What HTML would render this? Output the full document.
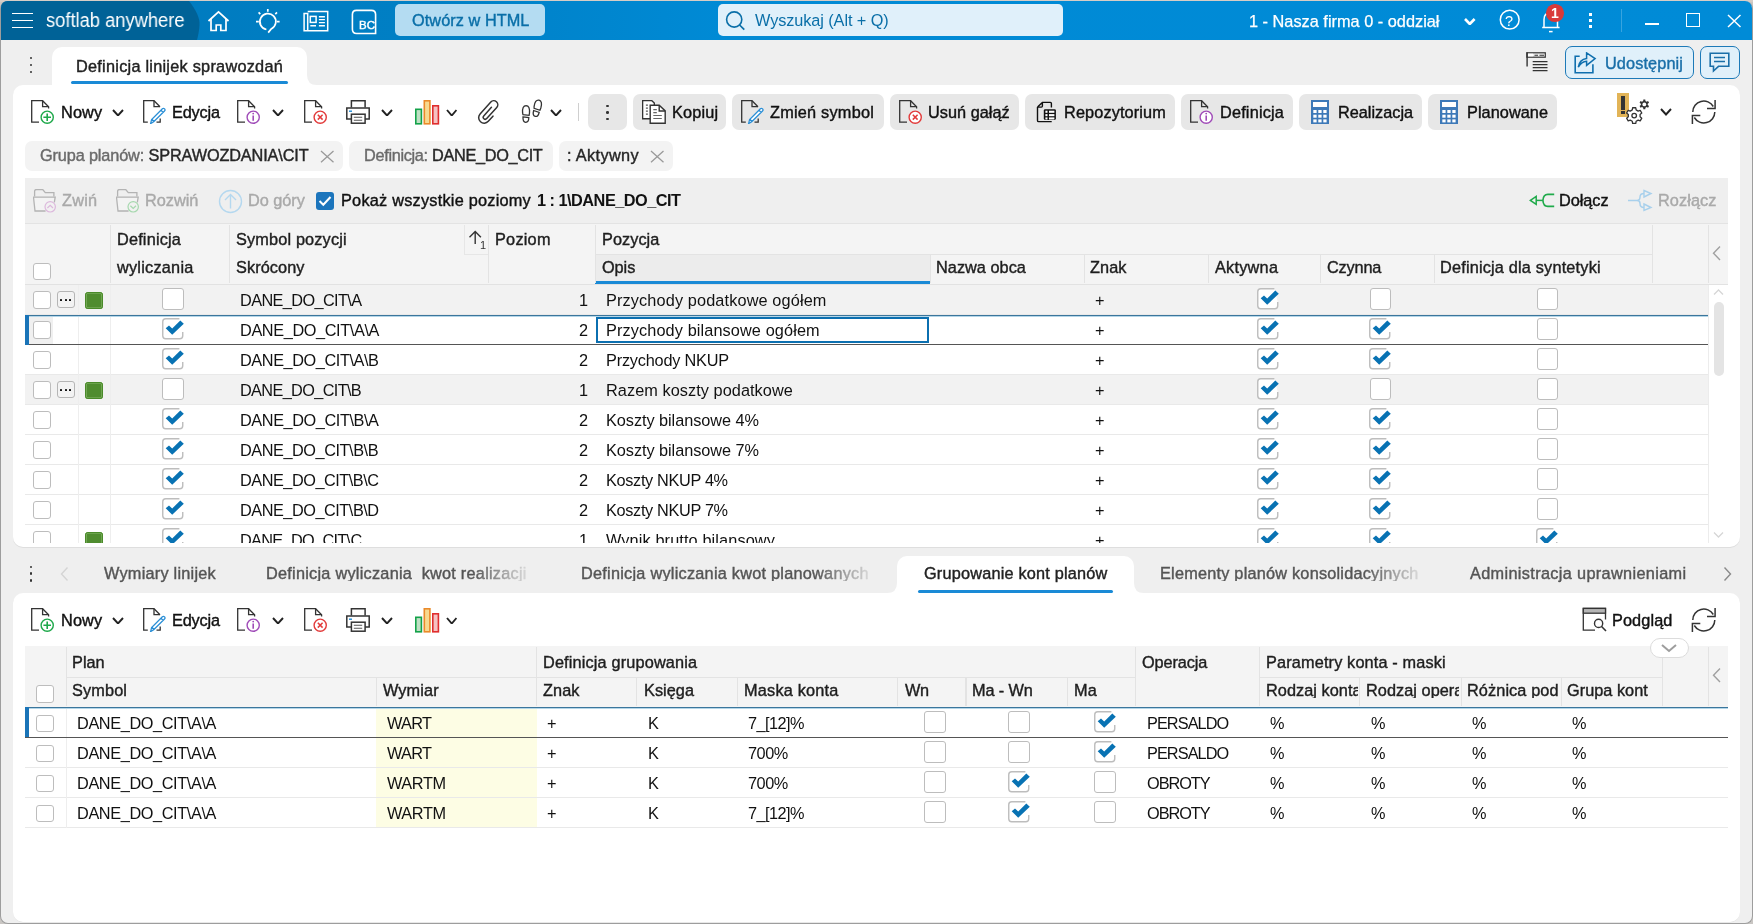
<!DOCTYPE html><html><head><meta charset="utf-8"><title>softlab anywhere</title><style>
*{margin:0;padding:0;box-sizing:border-box}
html,body{width:1753px;height:924px;overflow:hidden;background:#efefef;font-family:"Liberation Sans", sans-serif}
.b{position:absolute}
.t{position:absolute;white-space:nowrap;line-height:1;font-family:"Liberation Sans", sans-serif;will-change:transform}
</style></head><body><div class="b" style="left:0px;top:0px;width:1753px;height:924px;background:#c9c6c3"></div><div class="b" style="left:0px;top:0px;width:1753px;height:2px;background:#d6cdc6"></div><div class="b" style="left:0px;top:1px;width:1753px;height:923px;background:#efefef;border:1px solid #9d9d9d;border-top:none;border-radius:8px 8px 8px 8px;overflow:hidden"></div><div class="b" style="left:1px;top:1px;width:1751px;height:39px;background:linear-gradient(90deg,#0079bd 0px,#007fc4 400px,#008ad5 720px,#008bd7 1751px);border-radius:7px 7px 0 0"></div><svg class="b" style="left:1px;top:1px;" width="200" height="39" viewBox="0 0 200 39" fill="none"><path d="M7 0 H188 C195 9 199 17 198.5 24 C198 31 197 35 196 39 H0 V7 Q0 0 7 0 Z" fill="#006297"/></svg><div class="b" style="left:12px;top:12.5px;width:21px;height:1.8px;background:#fff"></div><div class="b" style="left:12px;top:19.5px;width:21px;height:1.8px;background:#fff"></div><div class="b" style="left:12px;top:26.5px;width:21px;height:1.8px;background:#fff"></div><div class="t" style="left:45.5px;top:11.11px;font-size:19.6px;color:#fff;font-weight:400;letter-spacing:0.000px;transform:scaleX(0.935);transform-origin:0 0">softlab anywhere</div><svg class="b" style="left:207px;top:10px;" width="24" height="23" viewBox="0 0 24 23" fill="none"><path d="M1.5 11 L11.5 1.8 L21.5 11" stroke="#fff" stroke-width="1.7"/><path d="M4 9 V20.5 H9.2 V15 H13.8 V20.5 H19 V9" stroke="#fff" stroke-width="1.7"/></svg><svg class="b" style="left:254px;top:7px;" width="30" height="27" viewBox="0 0 30 27" fill="none"><path d="M12.4 22.5 A8 8 0 1 1 17.2 21.9 L14.2 25.6" stroke="#fff" stroke-width="1.7"/><path d="M13.8 2 V4.8 M2 14.6 H4.8 M22.8 14.6 H25.6 M6.3 7.1 L4.6 5.4 M21.3 7.1 L23 5.4" stroke="#fff" stroke-width="1.7"/></svg><svg class="b" style="left:303px;top:10px;" width="27" height="23" viewBox="0 0 27 23" fill="none"><path d="M4.7 1.6 H24.7 V20.75 H1.1 V3.6 H4.7 V20.75" stroke="#fff" stroke-width="1.5"/><rect x="7.3" y="6.4" width="5.8" height="6" stroke="#fff" stroke-width="1.5"/><path d="M15.9 6.8 H21.9 M15.9 9.6 H21.9 M15.9 12.6 H21.9 M7.3 15.8 H13 M15.9 15.8 H21.9" stroke="#fff" stroke-width="1.4"/></svg><svg class="b" style="left:351px;top:9px;" width="27" height="27" viewBox="0 0 27 27" fill="none"><path d="M5.4 1.4 H20.4 Q24.6 1.4 24.6 5.6 V24.5 H5.6 Q1.4 24.5 1.4 20.3 V5.6 Q1.4 1.4 5.4 1.4 Z" stroke="#fff" stroke-width="1.6"/></svg><div class="t" style="left:359.4px;top:20.07px;font-size:11.5px;color:#fff;font-weight:400;-webkit-text-stroke:0.4px #fff;letter-spacing:0.100px;">BC</div><div class="b" style="left:395px;top:4px;width:150px;height:32px;background:#b4dcf2;border-radius:5px"></div><div class="t" style="left:412.0px;top:12.00px;font-size:16.3px;color:#0a6fa8;font-weight:400;-webkit-text-stroke:0.4px #0a6fa8;letter-spacing:0.060px;">Otwórz w HTML</div><div class="b" style="left:718px;top:4px;width:345px;height:32px;background:#e0f0fa;border-radius:5px"></div><svg class="b" style="left:724px;top:9px;" width="24" height="24" viewBox="0 0 24 24" fill="none"><circle cx="10.2" cy="10.5" r="7.6" stroke="#0a6fa8" stroke-width="1.6"/><path d="M15.6 16 L20.3 20.7" stroke="#0a6fa8" stroke-width="1.7"/></svg><div class="t" style="left:754.5px;top:12.00px;font-size:16.3px;color:#0a6fa8;font-weight:400;letter-spacing:-0.084px;">Wyszukaj (Alt + Q)</div><div class="t" style="left:1248.5px;top:13.40px;font-size:16.3px;color:#fff;font-weight:400;letter-spacing:0.017px;-webkit-text-stroke:0.25px #fff">1 - Nasza firma 0 - oddział</div><svg class="b" style="left:1464px;top:18.3px;" width="11.6" height="7" viewBox="0 0 11.6 7" fill="none"><path d="M1 1 L5.8 6 L10.6 1" stroke="#fff" stroke-width="2.6"/></svg><svg class="b" style="left:1498px;top:8px;" width="24" height="24" viewBox="0 0 24 24" fill="none"><circle cx="11.7" cy="11.7" r="9.4" stroke="#fff" stroke-width="1.5"/></svg><div class="t" style="left:1505.0px;top:13.73px;font-size:14.5px;color:#fff;font-weight:400;letter-spacing:0.000px;">?</div><svg class="b" style="left:1540px;top:11px;" width="24" height="23" viewBox="0 0 24 23" fill="none"><path d="M4 16.2 V8.5 Q4 1.8 10.8 1.8 Q17.5 1.8 17.5 8.5 V16.2 M2.2 16.5 H19.6" stroke="#fff" stroke-width="1.5"/><path d="M9 20.6 H12.6" stroke="#fff" stroke-width="1.5"/></svg><div class="b" style="left:1546.3px;top:4.4px;width:17.6px;height:17.6px;background:#d93a3a;border-radius:50%"></div><div class="t" style="left:1551.3px;top:5.95px;font-size:14px;color:#fff;font-weight:700;letter-spacing:0.000px;">1</div><div class="b" style="left:1589.3px;top:13.4px;width:2.6px;height:2.6px;background:#fff"></div><div class="b" style="left:1589.3px;top:19.4px;width:2.6px;height:2.6px;background:#fff"></div><div class="b" style="left:1589.3px;top:25.4px;width:2.6px;height:2.6px;background:#fff"></div><div class="b" style="left:1621px;top:9px;width:1.3px;height:22.5px;background:rgba(255,255,255,0.22)"></div><div class="b" style="left:1645px;top:23.3px;width:14px;height:1.5px;background:#fff"></div><div class="b" style="left:1686px;top:13.2px;width:14px;height:13.5px;border:1.5px solid #fff"></div><svg class="b" style="left:1727px;top:14px;" width="15" height="14" viewBox="0 0 15 14" fill="none"><path d="M1 1 L13.5 13 M13.5 1 L1 13" stroke="#fff" stroke-width="1.5"/></svg><div class="b" style="left:13px;top:85px;width:1727px;height:462px;background:#fff;border-radius:10px;box-shadow:0 1px 0 #dedede"></div><div class="b" style="left:29.7px;top:56.7px;width:2.7px;height:2.7px;background:#333;border-radius:50%"></div><div class="b" style="left:29.7px;top:63.7px;width:2.7px;height:2.7px;background:#333;border-radius:50%"></div><div class="b" style="left:29.7px;top:70.7px;width:2.7px;height:2.7px;background:#333;border-radius:50%"></div><div class="b" style="left:52px;top:47px;width:255px;height:45px;background:#fff;border-radius:10px 10px 0 0"></div><svg class="b" style="left:307px;top:75px;" width="10" height="10" viewBox="0 0 10 10" fill="none"><path d="M0 0 V10 H10 Q0 10 0 0 Z" fill="#fff"/></svg><div class="t" style="left:76.0px;top:57.70px;font-size:16.3px;color:#222;font-weight:400;-webkit-text-stroke:0.4px #222;letter-spacing:0.250px;">Definicja linijek sprawozdań</div><div class="b" style="left:71px;top:81px;width:217px;height:3px;background:#1a8ad6;border-radius:2px"></div><svg class="b" style="left:1525px;top:51px;" width="24" height="22" viewBox="0 0 24 22" fill="none"><path d="M2.1 1.3 V15.5" stroke="#333" stroke-width="1.4"/><rect x="1.9" y="1.8" width="18.4" height="4.4" stroke="#333" stroke-width="1.2"/><rect x="3" y="2.7" width="5" height="2.6" fill="#fff"/><path d="M9.5 4.2 H13 M14.5 4.2 H19" stroke="#333" stroke-width="1.1"/><path d="M7.7 10.7 H22.5 M7.7 13.7 H22.5 M7.7 16.7 H22.5 M7.7 19.6 H22.5" stroke="#333" stroke-width="1.3"/></svg><div class="b" style="left:1564.5px;top:46.3px;width:129px;height:32.7px;background:#e0f0fa;border:1.6px solid #1d7ab8;border-radius:7px"></div><svg class="b" style="left:1574px;top:52px;" width="23" height="22" viewBox="0 0 23 22" fill="none"><path d="M5.7 4.3 H1.2 V20.8 H18.9 V12.2" stroke="#0f6fae" stroke-width="1.6"/><path d="M4.3 15.1 Q5.5 7.5 12.6 6.6 V0.9 L21.1 6.5 L12.6 13.4 V9.3 Q7.5 9.6 4.3 15.1 Z" stroke="#0f6fae" stroke-width="1.5" stroke-linejoin="miter"/></svg><div class="t" style="left:1605.4px;top:55.20px;font-size:16.3px;color:#1a6fa8;font-weight:400;-webkit-text-stroke:0.4px #1a6fa8;letter-spacing:0.106px;">Udostępnij</div><div class="b" style="left:1699.5px;top:46.3px;width:40.5px;height:32.7px;background:#e0f0fa;border:1.6px solid #1d7ab8;border-radius:7px"></div><svg class="b" style="left:1709px;top:52px;" width="22" height="21" viewBox="0 0 22 21" fill="none"><path d="M1.2 1.2 H19.8 V14.3 H9.5 L4.5 19 V14.3 H1.2 Z" stroke="#1a6fa8" stroke-width="1.6"/><path d="M5 5.5 H16 M5 9.5 H16" stroke="#1a6fa8" stroke-width="1.5"/></svg><svg class="b" style="left:31px;top:100px;" width="24" height="24" viewBox="0 0 24 24" fill="none"><path d="M8 22.2 H0.7 V0.7 H11.6 L17.6 6.7 V8.5" stroke="#333" stroke-width="1.3"/><path d="M11.6 0.7 V6.7 H17.4" stroke="#333" stroke-width="1.3"/><circle cx="16.2" cy="17.2" r="6.1" fill="#fff" stroke="#1ea84a" stroke-width="1.4"/><path d="M12.4 17.2 H20 M16.2 13.4 V21" stroke="#1ea84a" stroke-width="1.6"/></svg><div class="t" style="left:60.8px;top:104.00px;font-size:16.3px;color:#111;font-weight:400;-webkit-text-stroke:0.4px #111;letter-spacing:0.133px;">Nowy</div><svg class="b" style="left:112px;top:108.5px;" width="12" height="7.5" viewBox="0 0 12 7.5" fill="none"><path d="M1 1 L6.0 6.5 L11 1" stroke="#222" stroke-width="1.9"/></svg><svg class="b" style="left:143px;top:100px;" width="24" height="24" viewBox="0 0 24 24" fill="none"><path d="M4.8 22.2 H0.7 V0.7 H11 L17 6.7" stroke="#333" stroke-width="1.3"/><path d="M11 0.7 V6.7 H17" stroke="#333" stroke-width="1.3"/><path d="M13.5 22.2 H17.2 V18.5" stroke="#333" stroke-width="1.3"/><path d="M7.6 23.6 L8.6 19.6 L19.4 8.8 Q20.5 7.8 21.6 8.9 Q22.5 10 21.5 11 L10.7 21.8 Z M8.9 19.3 L11 21.5 M18 10.2 L20.2 12.4" stroke="#2b8fd6" stroke-width="1.3" fill="#fff"/></svg><div class="t" style="left:172.0px;top:104.00px;font-size:16.3px;color:#111;font-weight:400;-webkit-text-stroke:0.4px #111;letter-spacing:-0.159px;">Edycja</div><svg class="b" style="left:237px;top:100px;" width="24" height="24" viewBox="0 0 24 24" fill="none"><path d="M8 22.2 H0.7 V0.7 H11.6 L17.6 6.7 V8.5" stroke="#333" stroke-width="1.3"/><path d="M11.6 0.7 V6.7 H17.4" stroke="#333" stroke-width="1.3"/><circle cx="16.2" cy="17.2" r="6.1" fill="#fff" stroke="#a04cb8" stroke-width="1.4"/><path d="M16.2 15.5 V20.8" stroke="#a04cb8" stroke-width="1.6"/><circle cx="16.2" cy="13.6" r="0.9" fill="#a04cb8"/></svg><svg class="b" style="left:272px;top:108.5px;" width="12" height="7.5" viewBox="0 0 12 7.5" fill="none"><path d="M1 1 L6.0 6.5 L11 1" stroke="#222" stroke-width="1.9"/></svg><svg class="b" style="left:304px;top:100px;" width="24" height="24" viewBox="0 0 24 24" fill="none"><path d="M8 22.2 H0.7 V0.7 H11.6 L17.6 6.7 V8.5" stroke="#333" stroke-width="1.3"/><path d="M11.6 0.7 V6.7 H17.4" stroke="#333" stroke-width="1.3"/><circle cx="16.2" cy="17.2" r="6.1" fill="#fff" stroke="#e23b3b" stroke-width="1.4"/><path d="M13.8 14.8 L18.6 19.6 M18.6 14.8 L13.8 19.6" stroke="#e23b3b" stroke-width="1.5"/></svg><svg class="b" style="left:346px;top:100px;" width="24" height="24" viewBox="0 0 24 24" fill="none"><path d="M5.4 7.5 V0.8 H19.1 V7.5" stroke="#333" stroke-width="1.5"/><path d="M5 19 H0.8 V7.9 H23.2 V19 H19" stroke="#333" stroke-width="1.5"/><rect x="5.4" y="14.2" width="13.7" height="9" stroke="#333" stroke-width="1.5" fill="#fff"/><path d="M7.8 17.3 H16.2 M7.8 20.3 H16.2" stroke="#555" stroke-width="1.1"/><path d="M3 11.2 H6" stroke="#1e8ad6" stroke-width="1.4"/></svg><svg class="b" style="left:381.4px;top:108.5px;" width="12" height="7.5" viewBox="0 0 12 7.5" fill="none"><path d="M1 1 L6.0 6.5 L11 1" stroke="#222" stroke-width="1.9"/></svg><svg class="b" style="left:414.5px;top:99.5px;" width="25" height="25" viewBox="0 0 25 25" fill="none"><rect x="0.8" y="9.3" width="5.6" height="14.5" fill="#bfe0c4" stroke="#14a24a" stroke-width="1.6"/><rect x="9.3" y="0.8" width="5.6" height="23" fill="#f7d98f" stroke="#ea8a2a" stroke-width="1.6"/><rect x="17.8" y="5.8" width="5.6" height="18" fill="#f5c2c2" stroke="#e02e2e" stroke-width="1.6"/></svg><svg class="b" style="left:445.6px;top:108.5px;" width="11.5" height="7.5" viewBox="0 0 11.5 7.5" fill="none"><path d="M1 1 L5.75 6.5 L10.5 1" stroke="#222" stroke-width="1.9"/></svg><svg class="b" style="left:477px;top:100px;" width="23" height="25" viewBox="0 0 23 25" fill="none"><g transform="translate(11.2 13.2) rotate(42)"><path d="M5.5 -1 V6 A5.5 5.5 0 0 1 -5.5 6 V-10 A4 4 0 0 1 2.5 -10 V5 A2 2 0 0 1 -1.5 5 V-6.5" stroke="#333" stroke-width="1.5" stroke-linecap="round"/></g></svg><svg class="b" style="left:521px;top:99px;" width="23" height="26" viewBox="0 0 23 26" fill="none"><g transform="translate(0.6 6)"><path d="M1 8 Q0.4 0.8 4.5 0.7 Q8.4 0.8 7.9 8 L7.5 10.4 L1.4 9.7 Z" stroke="#333" stroke-width="1.3"/><path d="M1.4 11.9 L7.2 12.6 Q7.2 17.4 4.1 17.3 Q1.1 17.2 1.4 11.9 Z" stroke="#333" stroke-width="1.3"/></g><g transform="translate(11.8 0.2) rotate(12 4 9)"><path d="M1 8 Q0.4 0.8 4.5 0.7 Q8.4 0.8 7.9 8 L7.5 10.4 L1.4 9.7 Z" stroke="#333" stroke-width="1.3"/><path d="M1.4 11.9 L7.2 12.6 Q7.2 17.4 4.1 17.3 Q1.1 17.2 1.4 11.9 Z" stroke="#333" stroke-width="1.3"/></g></svg><svg class="b" style="left:550px;top:108.5px;" width="12" height="7.5" viewBox="0 0 12 7.5" fill="none"><path d="M1 1 L6.0 6.5 L11 1" stroke="#222" stroke-width="1.9"/></svg><div class="b" style="left:577.5px;top:103px;width:1.5px;height:18px;background:#cfcfcf"></div><div class="b" style="left:588px;top:94px;width:39px;height:36px;background:#e7e7e7;border-radius:7px"></div><div class="b" style="left:606.2px;top:104.5px;width:2.7px;height:2.7px;background:#333;border-radius:50%"></div><div class="b" style="left:606.2px;top:111px;width:2.7px;height:2.7px;background:#333;border-radius:50%"></div><div class="b" style="left:606.2px;top:117.5px;width:2.7px;height:2.7px;background:#333;border-radius:50%"></div><div class="b" style="left:633px;top:94px;width:93px;height:36px;background:#e7e7e7;border-radius:7px"></div><svg class="b" style="left:642px;top:100px;" width="24" height="24" viewBox="0 0 24 24" fill="none"><path d="M0.6 0.5 H9.6 L12.3 3 V18.7 H0.6 Z" stroke="#333" stroke-width="1.4" fill="#fff"/><path d="M3.9 5.2 H5.9 M3.9 8.2 H5.9 M3.9 11.1 H5.9 M3.9 14.1 H5.9" stroke="#555" stroke-width="1.2"/><path d="M8.2 5.2 H17.2 L23.2 10.9 V23.3 H8.2 Z" stroke="#333" stroke-width="1.4" fill="#fff"/><path d="M17.2 5.2 V11 H23" stroke="#333" stroke-width="1.4"/><path d="M11.3 9.7 H14.8 M11.3 12.6 H14.8 M11.3 15.5 H19.8 M11.3 18.5 H19.8" stroke="#666" stroke-width="1.2"/></svg><div class="t" style="left:671.6px;top:104.00px;font-size:16.3px;color:#111;font-weight:400;-webkit-text-stroke:0.4px #111;letter-spacing:0.156px;">Kopiuj</div><div class="b" style="left:732px;top:94px;width:151.5px;height:36px;background:#e7e7e7;border-radius:7px"></div><svg class="b" style="left:741px;top:100px;" width="24" height="24" viewBox="0 0 24 24" fill="none"><path d="M4.8 22.2 H0.7 V0.7 H11 L17 6.7" stroke="#333" stroke-width="1.3"/><path d="M11 0.7 V6.7 H17" stroke="#333" stroke-width="1.3"/><path d="M13.5 22.2 H17.2 V18.5" stroke="#333" stroke-width="1.3"/><path d="M7.6 23.6 L8.6 19.6 L19.4 8.8 Q20.5 7.8 21.6 8.9 Q22.5 10 21.5 11 L10.7 21.8 Z M8.9 19.3 L11 21.5 M18 10.2 L20.2 12.4" stroke="#2b8fd6" stroke-width="1.3" fill="#fff"/></svg><div class="t" style="left:770.3px;top:104.00px;font-size:16.3px;color:#111;font-weight:400;-webkit-text-stroke:0.4px #111;letter-spacing:0.225px;">Zmień symbol</div><div class="b" style="left:890.3px;top:94px;width:128.4000000000001px;height:36px;background:#e7e7e7;border-radius:7px"></div><svg class="b" style="left:899px;top:100px;" width="24" height="24" viewBox="0 0 24 24" fill="none"><path d="M8 22.2 H0.7 V0.7 H11.6 L17.6 6.7 V8.5" stroke="#333" stroke-width="1.3"/><path d="M11.6 0.7 V6.7 H17.4" stroke="#333" stroke-width="1.3"/><circle cx="16.2" cy="17.2" r="6.1" fill="#fff" stroke="#e23b3b" stroke-width="1.4"/><path d="M13.8 14.8 L18.6 19.6 M18.6 14.8 L13.8 19.6" stroke="#e23b3b" stroke-width="1.5"/></svg><div class="t" style="left:928.0px;top:104.00px;font-size:16.3px;color:#111;font-weight:400;-webkit-text-stroke:0.4px #111;letter-spacing:0.020px;">Usuń gałąź</div><div class="b" style="left:1025px;top:94px;width:149.70000000000005px;height:36px;background:#e7e7e7;border-radius:7px"></div><svg class="b" style="left:1036px;top:101px;" width="21" height="22" viewBox="0 0 21 22" fill="none"><path d="M1.5 6.1 L6.4 1.4 H14.4 Q15.4 1.4 15.4 2.4 V6.6 M1.5 6.1 V19.4 Q1.5 20.6 2.7 20.6 H15.7 M6.4 1.4 V5.1 Q6.4 6.1 5.4 6.1 H1.5" stroke="#111" stroke-width="1.4" fill="none"/><rect x="7.8" y="8.2" width="12.1" height="10.7" rx="1.3" fill="#111"/><rect x="9.4" y="9.7" width="2.1" height="2.1" fill="#fff"/><rect x="13.0" y="9.7" width="5.4" height="2.1" fill="#fff"/><rect x="9.4" y="13.1" width="2.1" height="2.1" fill="#fff"/><rect x="13.0" y="13.1" width="5.4" height="2.1" fill="#fff"/><rect x="9.4" y="16.4" width="2.1" height="2.1" fill="#fff"/><rect x="13.0" y="16.4" width="5.4" height="2.1" fill="#fff"/></svg><div class="t" style="left:1063.7px;top:104.00px;font-size:16.3px;color:#111;font-weight:400;-webkit-text-stroke:0.4px #111;letter-spacing:0.128px;">Repozytorium</div><div class="b" style="left:1181px;top:94px;width:111.70000000000005px;height:36px;background:#e7e7e7;border-radius:7px"></div><svg class="b" style="left:1189.6px;top:100px;" width="24" height="24" viewBox="0 0 24 24" fill="none"><path d="M8 22.2 H0.7 V0.7 H11.6 L17.6 6.7 V8.5" stroke="#333" stroke-width="1.3"/><path d="M11.6 0.7 V6.7 H17.4" stroke="#333" stroke-width="1.3"/><circle cx="16.2" cy="17.2" r="6.1" fill="#fff" stroke="#a04cb8" stroke-width="1.4"/><path d="M16.2 15.5 V20.8" stroke="#a04cb8" stroke-width="1.6"/><circle cx="16.2" cy="13.6" r="0.9" fill="#a04cb8"/></svg><div class="t" style="left:1219.6px;top:104.00px;font-size:16.3px;color:#111;font-weight:400;-webkit-text-stroke:0.4px #111;letter-spacing:0.179px;">Definicja</div><div class="b" style="left:1299px;top:94px;width:122.59999999999991px;height:36px;background:#e7e7e7;border-radius:7px"></div><svg class="b" style="left:1311px;top:100px;" width="18" height="24" viewBox="0 0 18 24" fill="none"><rect x="0" y="0" width="18" height="24" fill="#3d79b8"/><rect x="2" y="2" width="14" height="5" fill="#fff"/><rect x="2.3" y="10.0" width="3.3" height="3" fill="#fff"/><rect x="7.3" y="10.0" width="3.3" height="3" fill="#fff"/><rect x="12.3" y="10.0" width="3.3" height="3" fill="#fff"/><rect x="2.3" y="14.7" width="3.3" height="3" fill="#fff"/><rect x="7.3" y="14.7" width="3.3" height="3" fill="#fff"/><rect x="12.3" y="14.7" width="3.3" height="3" fill="#fff"/><rect x="2.3" y="19.4" width="3.3" height="3" fill="#fff"/><rect x="7.3" y="19.4" width="3.3" height="3" fill="#fff"/><rect x="12.3" y="19.4" width="3.3" height="3" fill="#fff"/></svg><div class="t" style="left:1337.7px;top:104.00px;font-size:16.3px;color:#111;font-weight:400;-webkit-text-stroke:0.4px #111;letter-spacing:-0.003px;">Realizacja</div><div class="b" style="left:1428px;top:94px;width:128.79999999999995px;height:36px;background:#e7e7e7;border-radius:7px"></div><svg class="b" style="left:1440px;top:100px;" width="18" height="24" viewBox="0 0 18 24" fill="none"><rect x="0" y="0" width="18" height="24" fill="#3d79b8"/><rect x="2" y="2" width="14" height="5" fill="#fff"/><rect x="2.3" y="10.0" width="3.3" height="3" fill="#fff"/><rect x="7.3" y="10.0" width="3.3" height="3" fill="#fff"/><rect x="12.3" y="10.0" width="3.3" height="3" fill="#fff"/><rect x="2.3" y="14.7" width="3.3" height="3" fill="#fff"/><rect x="7.3" y="14.7" width="3.3" height="3" fill="#fff"/><rect x="12.3" y="14.7" width="3.3" height="3" fill="#fff"/><rect x="2.3" y="19.4" width="3.3" height="3" fill="#fff"/><rect x="7.3" y="19.4" width="3.3" height="3" fill="#fff"/><rect x="12.3" y="19.4" width="3.3" height="3" fill="#fff"/></svg><div class="t" style="left:1466.5px;top:104.00px;font-size:16.3px;color:#111;font-weight:400;-webkit-text-stroke:0.4px #111;letter-spacing:0.052px;">Planowane</div><div class="b" style="left:1617px;top:93px;width:12px;height:24px;background:#e2b457"></div><div class="b" style="left:1621.4px;top:96px;width:3.2px;height:13.5px;background:#333"></div><div class="b" style="left:1621.4px;top:111px;width:3.2px;height:3.2px;background:#333"></div><svg class="b" style="left:1625px;top:97px;" width="28" height="28" viewBox="0 0 28 28" fill="none"><path d="M7.64 10.75 L10.76 10.75 L11.13 12.92 L13.16 14.09 L15.21 13.33 L16.78 16.03 L15.08 17.43 L15.08 19.77 L16.78 21.17 L15.21 23.87 L13.16 23.11 L11.13 24.28 L10.76 26.45 L7.64 26.45 L7.27 24.28 L5.24 23.11 L3.19 23.87 L1.62 21.17 L3.32 19.77 L3.32 17.43 L1.62 16.03 L3.19 13.33 L5.24 14.09 L7.27 12.92 Z" stroke="#333" stroke-width="1.3" fill="#fff" stroke-linejoin="round"/><circle cx="9.2" cy="18.6" r="2.3" stroke="#333" stroke-width="1.3"/><path d="M18.32 2.50 L20.28 2.50 L20.43 4.09 L21.61 4.77 L23.06 4.10 L24.03 5.79 L22.73 6.72 L22.73 8.08 L24.03 9.01 L23.06 10.70 L21.61 10.03 L20.43 10.71 L20.28 12.30 L18.32 12.30 L18.17 10.71 L16.99 10.03 L15.54 10.70 L14.57 9.01 L15.87 8.08 L15.87 6.72 L14.57 5.79 L15.54 4.10 L16.99 4.77 L18.17 4.09 Z" fill="#333"/><circle cx="19.3" cy="7.4" r="1.9" fill="#fff"/></svg><svg class="b" style="left:1660px;top:108px;" width="12" height="7.5" viewBox="0 0 12 7.5" fill="none"><path d="M1 1 L6.0 6.5 L11 1" stroke="#222" stroke-width="1.9"/></svg><svg class="b" style="left:1691.0px;top:99.0px;" width="26" height="27" viewBox="0 0 26 27" fill="none"><path d="M1.8 13 A11 11 0 0 1 22.3 7.5" stroke="#333" stroke-width="1.5"/><path d="M24.1 1 V9.6 H16" stroke="#333" stroke-width="1.5"/><path d="M23.8 13 A11 11 0 0 1 3.3 18.5" stroke="#333" stroke-width="1.5"/><path d="M1.4 25 V16.4 H9.3" stroke="#333" stroke-width="1.5"/></svg><div class="b" style="left:25px;top:141px;width:318px;height:30px;background:#f3f3f3;border-radius:7px"></div><div class="t" style="left:40.4px;top:146.50px;font-size:16.3px;color:#262626;font-weight:400;-webkit-text-stroke:0.4px #262626;letter-spacing:-0.138px;"><span style="color:#6a6a6a;-webkit-text-stroke-color:#6a6a6a">Grupa planów: </span>SPRAWOZDANIA\CIT</div><svg class="b" style="left:320px;top:150px;" width="15" height="13" viewBox="0 0 15 13" fill="none"><path d="M1 1 L13.5 12.2 M13.5 1 L1 12.2" stroke="#9a9a9a" stroke-width="1.3"/></svg><div class="b" style="left:349.4px;top:141px;width:203.2px;height:30px;background:#f3f3f3;border-radius:7px"></div><div class="t" style="left:364.4px;top:146.50px;font-size:16.3px;color:#262626;font-weight:400;-webkit-text-stroke:0.4px #262626;letter-spacing:-0.318px;"><span style="color:#6a6a6a;-webkit-text-stroke-color:#6a6a6a">Definicja: </span>DANE_DO_CIT</div><div class="b" style="left:559px;top:141px;width:113.6px;height:30px;background:#f3f3f3;border-radius:7px"></div><div class="t" style="left:567.0px;top:146.50px;font-size:16.3px;color:#262626;font-weight:400;-webkit-text-stroke:0.4px #262626;letter-spacing:0.359px;">: Aktywny</div><svg class="b" style="left:650px;top:150px;" width="15" height="13" viewBox="0 0 15 13" fill="none"><path d="M1 1 L13.5 12.2 M13.5 1 L1 12.2" stroke="#9a9a9a" stroke-width="1.3"/></svg><div class="b" style="left:25px;top:178px;width:1703px;height:46px;background:#efefef;border-bottom:1px solid #e3e3e3"></div><svg class="b" style="left:33px;top:189px;" width="25" height="25" viewBox="0 0 25 25" fill="none"><path d="M1.6 7.5 V2.5 Q1.6 0.5 3.6 0.5 H9.7 L12.3 3.6 H20.9 V7.5" stroke="#b3b3b3" stroke-width="1.3"/><path d="M21.3 13.4 L22.2 8.2 H0.5 L2 22 H12.6" stroke="#b3b3b3" stroke-width="1.3" fill="#f3f3f3"/><circle cx="17.2" cy="17.8" r="5.2" fill="#f1f1f1" stroke="#dcb8dc" stroke-width="1.2"/><path d="M14.4 19 L17.2 16.4 L20 19" stroke="#dcb8dc" stroke-width="1.2"/></svg><div class="t" style="left:61.6px;top:192.20px;font-size:16.3px;color:#a9a9a9;font-weight:400;-webkit-text-stroke:0.4px #a9a9a9;letter-spacing:0.215px;">Zwiń</div><svg class="b" style="left:116.4px;top:189px;" width="25" height="25" viewBox="0 0 25 25" fill="none"><path d="M1.6 7.5 V2.5 Q1.6 0.5 3.6 0.5 H9.7 L12.3 3.6 H20.9 V7.5" stroke="#b3b3b3" stroke-width="1.3"/><path d="M21.3 13.4 L22.2 8.2 H0.5 L2 22 H12.6" stroke="#b3b3b3" stroke-width="1.3" fill="#f3f3f3"/><circle cx="17.2" cy="17.8" r="5.2" fill="#f1f1f1" stroke="#a6d8ae" stroke-width="1.2"/><path d="M14.4 16.8 L17.2 19.4 L20 16.8" stroke="#a6d8ae" stroke-width="1.2"/></svg><div class="t" style="left:145.2px;top:192.20px;font-size:16.3px;color:#a9a9a9;font-weight:400;-webkit-text-stroke:0.4px #a9a9a9;letter-spacing:-0.005px;">Rozwiń</div><svg class="b" style="left:217.5px;top:188.5px;" width="25" height="25" viewBox="0 0 25 25" fill="none"><circle cx="12.5" cy="12.5" r="11" stroke="#b5d8ef" stroke-width="1.4"/><path d="M12.5 19.5 V5.5 M7 11 L12.5 5.5 L18 11" stroke="#b5d8ef" stroke-width="1.4"/></svg><div class="t" style="left:247.6px;top:192.20px;font-size:16.3px;color:#a9a9a9;font-weight:400;-webkit-text-stroke:0.4px #a9a9a9;letter-spacing:-0.031px;">Do góry</div><div class="b" style="left:316px;top:192px;width:18px;height:18px;background:#1c75bc;border-radius:3px"></div><svg class="b" style="left:316px;top:192px;" width="18" height="18" viewBox="0 0 18 18" fill="none"><path d="M3.5 9 L7.3 12.8 L14.5 5" stroke="#fff" stroke-width="2"/></svg><div class="t" style="left:340.6px;top:192.20px;font-size:16.3px;color:#111;font-weight:400;-webkit-text-stroke:0.4px #111;letter-spacing:0.235px;">Pokaż wszystkie poziomy</div><div class="t" style="left:537.3px;top:192.20px;font-size:16.3px;color:#111;font-weight:700;letter-spacing:-0.500px;">1 : 1\DANE_DO_CIT</div><svg class="b" style="left:1528px;top:192px;" width="28" height="16" viewBox="0 0 28 16" fill="none"><path d="M2.4 8.4 L8.2 4.4 V12.4 Z" stroke="#1faa4a" stroke-width="1.5"/><path d="M8.2 8.4 H14.8" stroke="#1faa4a" stroke-width="1.5"/><path d="M26.2 2.4 H19.8 Q15.3 2.4 14.9 8.4 Q15.3 14.4 19.8 14.4 H26.2" stroke="#1faa4a" stroke-width="1.6"/></svg><div class="t" style="left:1558.9px;top:192.20px;font-size:16.3px;color:#111;font-weight:400;-webkit-text-stroke:0.4px #111;letter-spacing:-0.047px;">Dołącz</div><svg class="b" style="left:1627px;top:189px;" width="27" height="23" viewBox="0 0 27 23" fill="none"><path d="M1 11.5 H10 Q13 11.5 13 8 Q13 4.5 17 4.5 M13 14.5 Q13 18.5 17 18.5 M10 11.5 Q13 11.5 13 14.5" stroke="#a8d0ec" stroke-width="1.5"/><path d="M17 1.5 L24 4.5 L17 8 Z M17 15 L24 18.5 L17 21.5 Z" stroke="#a8d0ec" stroke-width="1.4"/></svg><div class="t" style="left:1657.6px;top:192.20px;font-size:16.3px;color:#a9a9a9;font-weight:400;-webkit-text-stroke:0.4px #a9a9a9;letter-spacing:0.083px;">Rozłącz</div><div class="b" style="left:25px;top:224px;width:1703px;height:60.6px;background:#f4f4f4;border-bottom:1.6px solid #e2e2e2"></div><div class="b" style="left:594.5px;top:254.5px;width:335px;height:29px;background:#ececec"></div><div class="b" style="left:595px;top:281px;width:335px;height:3px;background:#1a8ad6"></div><div class="b" style="left:110px;top:225px;width:1.3px;height:58px;background:#e3e3e3"></div><div class="b" style="left:228.5px;top:225px;width:1.3px;height:58px;background:#e3e3e3"></div><div class="b" style="left:488px;top:225px;width:1.3px;height:58px;background:#e3e3e3"></div><div class="b" style="left:594.5px;top:225px;width:1.3px;height:58px;background:#e3e3e3"></div><div class="b" style="left:1652px;top:225px;width:1.3px;height:58px;background:#e3e3e3"></div><div class="b" style="left:1707.5px;top:225px;width:1.3px;height:58px;background:#e3e3e3"></div><div class="b" style="left:929.5px;top:255px;width:1.3px;height:28px;background:#e3e3e3"></div><div class="b" style="left:1083.7px;top:255px;width:1.3px;height:28px;background:#e3e3e3"></div><div class="b" style="left:1208px;top:255px;width:1.3px;height:28px;background:#e3e3e3"></div><div class="b" style="left:1320px;top:255px;width:1.3px;height:28px;background:#e3e3e3"></div><div class="b" style="left:1433.8px;top:255px;width:1.3px;height:28px;background:#e3e3e3"></div><div class="b" style="left:594.5px;top:254px;width:1057.5px;height:1.3px;background:#e3e3e3"></div><div class="b" style="left:463.5px;top:224.5px;width:24.5px;height:30px;border-left:1.3px solid #e6e6e6;border-bottom:1.3px solid #e6e6e6"></div><svg class="b" style="left:468px;top:229px;" width="20" height="22" viewBox="0 0 20 22" fill="none"><path d="M7.2 15 V2.5 M1.5 8.3 L7.2 2.5 L12.9 8.3" stroke="#333" stroke-width="1.4"/></svg><div class="t" style="left:480.0px;top:240.49px;font-size:11px;color:#333;font-weight:400;letter-spacing:0.000px;">1</div><div class="t" style="left:117.2px;top:231.00px;font-size:16.3px;color:#1e1e1e;font-weight:400;-webkit-text-stroke:0.4px #1e1e1e;letter-spacing:0.179px;">Definicja</div><div class="t" style="left:117.2px;top:259.20px;font-size:16.3px;color:#1e1e1e;font-weight:400;-webkit-text-stroke:0.4px #1e1e1e;letter-spacing:0.234px;">wyliczania</div><div class="t" style="left:235.5px;top:231.00px;font-size:16.3px;color:#1e1e1e;font-weight:400;-webkit-text-stroke:0.4px #1e1e1e;letter-spacing:0.152px;">Symbol pozycji</div><div class="t" style="left:235.5px;top:259.20px;font-size:16.3px;color:#1e1e1e;font-weight:400;-webkit-text-stroke:0.4px #1e1e1e;letter-spacing:0.086px;">Skrócony</div><div class="t" style="left:495.0px;top:231.00px;font-size:16.3px;color:#1e1e1e;font-weight:400;-webkit-text-stroke:0.4px #1e1e1e;letter-spacing:0.232px;">Poziom</div><div class="t" style="left:601.7px;top:231.00px;font-size:16.3px;color:#1e1e1e;font-weight:400;-webkit-text-stroke:0.4px #1e1e1e;letter-spacing:0.051px;">Pozycja</div><div class="t" style="left:601.7px;top:259.20px;font-size:16.3px;color:#1e1e1e;font-weight:400;-webkit-text-stroke:0.4px #1e1e1e;letter-spacing:-0.066px;">Opis</div><div class="t" style="left:936.0px;top:259.20px;font-size:16.3px;color:#1e1e1e;font-weight:400;-webkit-text-stroke:0.4px #1e1e1e;letter-spacing:0.034px;">Nazwa obca</div><div class="t" style="left:1090.0px;top:259.20px;font-size:16.3px;color:#1e1e1e;font-weight:400;-webkit-text-stroke:0.4px #1e1e1e;letter-spacing:0.074px;">Znak</div><div class="t" style="left:1215.0px;top:259.20px;font-size:16.3px;color:#1e1e1e;font-weight:400;-webkit-text-stroke:0.4px #1e1e1e;letter-spacing:0.239px;">Aktywna</div><div class="t" style="left:1327.0px;top:259.20px;font-size:16.3px;color:#1e1e1e;font-weight:400;-webkit-text-stroke:0.4px #1e1e1e;letter-spacing:-0.167px;">Czynna</div><div class="t" style="left:1440.0px;top:259.20px;font-size:16.3px;color:#1e1e1e;font-weight:400;-webkit-text-stroke:0.4px #1e1e1e;letter-spacing:0.183px;">Definicja dla syntetyki</div><div class="b" style="left:33.2px;top:262.5px;width:17.5px;height:17.5px;border:1.4px solid #bdbdbd;border-radius:3px;background:#fff"></div><svg class="b" style="left:1711px;top:245px;" width="12" height="17" viewBox="0 0 12 17" fill="none"><path d="M9 1.5 L2.5 8.2 L9 15" stroke="#a0a0a0" stroke-width="1.4"/></svg><div class="b" style="left:25px;top:285px;width:1683px;height:258px;overflow:hidden"><div class="b" style="left:0px;top:0px;width:1683px;height:30px;background:#f2f2f2;border-bottom:1px solid #e9e9e9"></div><div class="b" style="left:52.5px;top:0px;width:1px;height:30px;background:#eeeeee"></div><div class="b" style="left:85px;top:0px;width:1px;height:30px;background:#eeeeee"></div><div class="b" style="left:8.2px;top:6.2px;width:17.5px;height:17.5px;border:1.4px solid #bdbdbd;border-radius:3px;background:#fff"></div><div class="b" style="left:32.3px;top:6.2px;width:17.3px;height:17.3px;border:1.4px solid #b5b5b5;border-radius:3px;background:#f3f3f3"></div><div class="b" style="left:35.3px;top:14px;width:2.1px;height:2.1px;background:#111;border-radius:0.6px"></div><div class="b" style="left:39.6px;top:14px;width:2.1px;height:2.1px;background:#111;border-radius:0.6px"></div><div class="b" style="left:44px;top:14px;width:2.1px;height:2.1px;background:#111;border-radius:0.6px"></div><div class="b" style="left:60px;top:7px;width:17.7px;height:16.8px;background:#4f8c2f;border-radius:3.5px;box-shadow:inset 0 0 0 1px #4a8a2a,inset 0 0 0 1.6px #86b86a"></div><div class="b" style="left:137.3px;top:3.1px;width:21.5px;height:21.5px;border:1.4px solid #bdbdbd;border-radius:3px;background:#fff"></div><div class="t" style="left:215.0px;top:6.70px;font-size:16.3px;color:#111;font-weight:400;letter-spacing:-0.602px;">DANE_DO_CIT\A</div><div class="t" style="left:537.0px;top:6.70px;font-size:16.3px;color:#111;font-weight:400;letter-spacing:0.000px;width:26px;text-align:right">1</div><div class="t" style="left:581.0px;top:6.70px;font-size:16.3px;color:#111;font-weight:400;letter-spacing:0.127px;">Przychody podatkowe ogółem</div><div class="t" style="left:1069.5px;top:6.70px;font-size:16.3px;color:#111;font-weight:400;letter-spacing:0.000px;">+</div><svg class="b" style="left:1231.9px;top:3.1px;" width="22.5" height="21.5" viewBox="0 0 22.5 21.5" fill="none"><path d="M17.40 0.75 H3.75 Q0.75 0.75 0.75 3.75 V17.75 Q0.75 20.75 3.75 20.75 H17.75 Q20.75 20.75 20.75 17.75 V14.00" stroke="#bdbdbd" stroke-width="1.4" fill="#fff"/><path d="M3.70 10.20 L7.00 7.60 L10.20 10.50 L18.30 2.50 L21.80 5.70 L10.20 16.70 Z" fill="#0872b3"/></svg><div class="b" style="left:1344.5px;top:3.1px;width:21.5px;height:21.5px;border:1.4px solid #bdbdbd;border-radius:3px;background:#fff"></div><div class="b" style="left:1511.6px;top:3.1px;width:21.5px;height:21.5px;border:1.4px solid #bdbdbd;border-radius:3px;background:#fff"></div><div class="b" style="left:0px;top:30px;width:1683px;height:30px;background:#fff;border-bottom:1px solid #e9e9e9"></div><div class="b" style="left:52.5px;top:30px;width:1px;height:30px;background:#eeeeee"></div><div class="b" style="left:85px;top:30px;width:1px;height:30px;background:#eeeeee"></div><div class="b" style="left:8.2px;top:36.2px;width:17.5px;height:17.5px;border:1.4px solid #bdbdbd;border-radius:3px;background:#fff"></div><svg class="b" style="left:136.70000000000002px;top:33.1px;" width="22.5" height="21.5" viewBox="0 0 22.5 21.5" fill="none"><path d="M17.40 0.75 H3.75 Q0.75 0.75 0.75 3.75 V17.75 Q0.75 20.75 3.75 20.75 H17.75 Q20.75 20.75 20.75 17.75 V14.00" stroke="#bdbdbd" stroke-width="1.4" fill="#fff"/><path d="M3.70 10.20 L7.00 7.60 L10.20 10.50 L18.30 2.50 L21.80 5.70 L10.20 16.70 Z" fill="#0872b3"/></svg><div class="t" style="left:215.0px;top:36.70px;font-size:16.3px;color:#111;font-weight:400;letter-spacing:-0.382px;">DANE_DO_CIT\A\A</div><div class="t" style="left:537.0px;top:36.70px;font-size:16.3px;color:#111;font-weight:400;letter-spacing:0.000px;width:26px;text-align:right">2</div><div class="t" style="left:581.0px;top:36.70px;font-size:16.3px;color:#111;font-weight:400;letter-spacing:0.110px;">Przychody bilansowe ogółem</div><div class="t" style="left:1069.5px;top:36.70px;font-size:16.3px;color:#111;font-weight:400;letter-spacing:0.000px;">+</div><svg class="b" style="left:1231.9px;top:33.1px;" width="22.5" height="21.5" viewBox="0 0 22.5 21.5" fill="none"><path d="M17.40 0.75 H3.75 Q0.75 0.75 0.75 3.75 V17.75 Q0.75 20.75 3.75 20.75 H17.75 Q20.75 20.75 20.75 17.75 V14.00" stroke="#bdbdbd" stroke-width="1.4" fill="#fff"/><path d="M3.70 10.20 L7.00 7.60 L10.20 10.50 L18.30 2.50 L21.80 5.70 L10.20 16.70 Z" fill="#0872b3"/></svg><svg class="b" style="left:1343.9px;top:33.1px;" width="22.5" height="21.5" viewBox="0 0 22.5 21.5" fill="none"><path d="M17.40 0.75 H3.75 Q0.75 0.75 0.75 3.75 V17.75 Q0.75 20.75 3.75 20.75 H17.75 Q20.75 20.75 20.75 17.75 V14.00" stroke="#bdbdbd" stroke-width="1.4" fill="#fff"/><path d="M3.70 10.20 L7.00 7.60 L10.20 10.50 L18.30 2.50 L21.80 5.70 L10.20 16.70 Z" fill="#0872b3"/></svg><div class="b" style="left:1511.6px;top:33.1px;width:21.5px;height:21.5px;border:1.4px solid #bdbdbd;border-radius:3px;background:#fff"></div><div class="b" style="left:0px;top:60px;width:1683px;height:30px;background:#fff;border-bottom:1px solid #e9e9e9"></div><div class="b" style="left:52.5px;top:60px;width:1px;height:30px;background:#eeeeee"></div><div class="b" style="left:85px;top:60px;width:1px;height:30px;background:#eeeeee"></div><div class="b" style="left:8.2px;top:66.2px;width:17.5px;height:17.5px;border:1.4px solid #bdbdbd;border-radius:3px;background:#fff"></div><svg class="b" style="left:136.70000000000002px;top:63.1px;" width="22.5" height="21.5" viewBox="0 0 22.5 21.5" fill="none"><path d="M17.40 0.75 H3.75 Q0.75 0.75 0.75 3.75 V17.75 Q0.75 20.75 3.75 20.75 H17.75 Q20.75 20.75 20.75 17.75 V14.00" stroke="#bdbdbd" stroke-width="1.4" fill="#fff"/><path d="M3.70 10.20 L7.00 7.60 L10.20 10.50 L18.30 2.50 L21.80 5.70 L10.20 16.70 Z" fill="#0872b3"/></svg><div class="t" style="left:215.0px;top:66.70px;font-size:16.3px;color:#111;font-weight:400;letter-spacing:-0.415px;">DANE_DO_CIT\A\B</div><div class="t" style="left:537.0px;top:66.70px;font-size:16.3px;color:#111;font-weight:400;letter-spacing:0.000px;width:26px;text-align:right">2</div><div class="t" style="left:581.0px;top:66.70px;font-size:16.3px;color:#111;font-weight:400;letter-spacing:-0.199px;">Przychody NKUP</div><div class="t" style="left:1069.5px;top:66.70px;font-size:16.3px;color:#111;font-weight:400;letter-spacing:0.000px;">+</div><svg class="b" style="left:1231.9px;top:63.1px;" width="22.5" height="21.5" viewBox="0 0 22.5 21.5" fill="none"><path d="M17.40 0.75 H3.75 Q0.75 0.75 0.75 3.75 V17.75 Q0.75 20.75 3.75 20.75 H17.75 Q20.75 20.75 20.75 17.75 V14.00" stroke="#bdbdbd" stroke-width="1.4" fill="#fff"/><path d="M3.70 10.20 L7.00 7.60 L10.20 10.50 L18.30 2.50 L21.80 5.70 L10.20 16.70 Z" fill="#0872b3"/></svg><svg class="b" style="left:1343.9px;top:63.1px;" width="22.5" height="21.5" viewBox="0 0 22.5 21.5" fill="none"><path d="M17.40 0.75 H3.75 Q0.75 0.75 0.75 3.75 V17.75 Q0.75 20.75 3.75 20.75 H17.75 Q20.75 20.75 20.75 17.75 V14.00" stroke="#bdbdbd" stroke-width="1.4" fill="#fff"/><path d="M3.70 10.20 L7.00 7.60 L10.20 10.50 L18.30 2.50 L21.80 5.70 L10.20 16.70 Z" fill="#0872b3"/></svg><div class="b" style="left:1511.6px;top:63.1px;width:21.5px;height:21.5px;border:1.4px solid #bdbdbd;border-radius:3px;background:#fff"></div><div class="b" style="left:0px;top:90px;width:1683px;height:30px;background:#f2f2f2;border-bottom:1px solid #e9e9e9"></div><div class="b" style="left:52.5px;top:90px;width:1px;height:30px;background:#eeeeee"></div><div class="b" style="left:85px;top:90px;width:1px;height:30px;background:#eeeeee"></div><div class="b" style="left:8.2px;top:96.2px;width:17.5px;height:17.5px;border:1.4px solid #bdbdbd;border-radius:3px;background:#fff"></div><div class="b" style="left:32.3px;top:96.2px;width:17.3px;height:17.3px;border:1.4px solid #b5b5b5;border-radius:3px;background:#f3f3f3"></div><div class="b" style="left:35.3px;top:104px;width:2.1px;height:2.1px;background:#111;border-radius:0.6px"></div><div class="b" style="left:39.6px;top:104px;width:2.1px;height:2.1px;background:#111;border-radius:0.6px"></div><div class="b" style="left:44px;top:104px;width:2.1px;height:2.1px;background:#111;border-radius:0.6px"></div><div class="b" style="left:60px;top:97px;width:17.7px;height:16.8px;background:#4f8c2f;border-radius:3.5px;box-shadow:inset 0 0 0 1px #4a8a2a,inset 0 0 0 1.6px #86b86a"></div><div class="b" style="left:137.3px;top:93.1px;width:21.5px;height:21.5px;border:1.4px solid #bdbdbd;border-radius:3px;background:#fff"></div><div class="t" style="left:215.0px;top:96.70px;font-size:16.3px;color:#111;font-weight:400;letter-spacing:-0.639px;">DANE_DO_CIT\B</div><div class="t" style="left:537.0px;top:96.70px;font-size:16.3px;color:#111;font-weight:400;letter-spacing:0.000px;width:26px;text-align:right">1</div><div class="t" style="left:581.0px;top:96.70px;font-size:16.3px;color:#111;font-weight:400;letter-spacing:0.061px;">Razem koszty podatkowe</div><div class="t" style="left:1069.5px;top:96.70px;font-size:16.3px;color:#111;font-weight:400;letter-spacing:0.000px;">+</div><svg class="b" style="left:1231.9px;top:93.1px;" width="22.5" height="21.5" viewBox="0 0 22.5 21.5" fill="none"><path d="M17.40 0.75 H3.75 Q0.75 0.75 0.75 3.75 V17.75 Q0.75 20.75 3.75 20.75 H17.75 Q20.75 20.75 20.75 17.75 V14.00" stroke="#bdbdbd" stroke-width="1.4" fill="#fff"/><path d="M3.70 10.20 L7.00 7.60 L10.20 10.50 L18.30 2.50 L21.80 5.70 L10.20 16.70 Z" fill="#0872b3"/></svg><div class="b" style="left:1344.5px;top:93.1px;width:21.5px;height:21.5px;border:1.4px solid #bdbdbd;border-radius:3px;background:#fff"></div><div class="b" style="left:1511.6px;top:93.1px;width:21.5px;height:21.5px;border:1.4px solid #bdbdbd;border-radius:3px;background:#fff"></div><div class="b" style="left:0px;top:120px;width:1683px;height:30px;background:#fff;border-bottom:1px solid #e9e9e9"></div><div class="b" style="left:52.5px;top:120px;width:1px;height:30px;background:#eeeeee"></div><div class="b" style="left:85px;top:120px;width:1px;height:30px;background:#eeeeee"></div><div class="b" style="left:8.2px;top:126.2px;width:17.5px;height:17.5px;border:1.4px solid #bdbdbd;border-radius:3px;background:#fff"></div><svg class="b" style="left:136.70000000000002px;top:123.1px;" width="22.5" height="21.5" viewBox="0 0 22.5 21.5" fill="none"><path d="M17.40 0.75 H3.75 Q0.75 0.75 0.75 3.75 V17.75 Q0.75 20.75 3.75 20.75 H17.75 Q20.75 20.75 20.75 17.75 V14.00" stroke="#bdbdbd" stroke-width="1.4" fill="#fff"/><path d="M3.70 10.20 L7.00 7.60 L10.20 10.50 L18.30 2.50 L21.80 5.70 L10.20 16.70 Z" fill="#0872b3"/></svg><div class="t" style="left:215.0px;top:126.70px;font-size:16.3px;color:#111;font-weight:400;letter-spacing:-0.415px;">DANE_DO_CIT\B\A</div><div class="t" style="left:537.0px;top:126.70px;font-size:16.3px;color:#111;font-weight:400;letter-spacing:0.000px;width:26px;text-align:right">2</div><div class="t" style="left:581.0px;top:126.70px;font-size:16.3px;color:#111;font-weight:400;letter-spacing:-0.052px;">Koszty bilansowe 4%</div><div class="t" style="left:1069.5px;top:126.70px;font-size:16.3px;color:#111;font-weight:400;letter-spacing:0.000px;">+</div><svg class="b" style="left:1231.9px;top:123.1px;" width="22.5" height="21.5" viewBox="0 0 22.5 21.5" fill="none"><path d="M17.40 0.75 H3.75 Q0.75 0.75 0.75 3.75 V17.75 Q0.75 20.75 3.75 20.75 H17.75 Q20.75 20.75 20.75 17.75 V14.00" stroke="#bdbdbd" stroke-width="1.4" fill="#fff"/><path d="M3.70 10.20 L7.00 7.60 L10.20 10.50 L18.30 2.50 L21.80 5.70 L10.20 16.70 Z" fill="#0872b3"/></svg><svg class="b" style="left:1343.9px;top:123.1px;" width="22.5" height="21.5" viewBox="0 0 22.5 21.5" fill="none"><path d="M17.40 0.75 H3.75 Q0.75 0.75 0.75 3.75 V17.75 Q0.75 20.75 3.75 20.75 H17.75 Q20.75 20.75 20.75 17.75 V14.00" stroke="#bdbdbd" stroke-width="1.4" fill="#fff"/><path d="M3.70 10.20 L7.00 7.60 L10.20 10.50 L18.30 2.50 L21.80 5.70 L10.20 16.70 Z" fill="#0872b3"/></svg><div class="b" style="left:1511.6px;top:123.1px;width:21.5px;height:21.5px;border:1.4px solid #bdbdbd;border-radius:3px;background:#fff"></div><div class="b" style="left:0px;top:150px;width:1683px;height:30px;background:#fff;border-bottom:1px solid #e9e9e9"></div><div class="b" style="left:52.5px;top:150px;width:1px;height:30px;background:#eeeeee"></div><div class="b" style="left:85px;top:150px;width:1px;height:30px;background:#eeeeee"></div><div class="b" style="left:8.2px;top:156.2px;width:17.5px;height:17.5px;border:1.4px solid #bdbdbd;border-radius:3px;background:#fff"></div><svg class="b" style="left:136.70000000000002px;top:153.1px;" width="22.5" height="21.5" viewBox="0 0 22.5 21.5" fill="none"><path d="M17.40 0.75 H3.75 Q0.75 0.75 0.75 3.75 V17.75 Q0.75 20.75 3.75 20.75 H17.75 Q20.75 20.75 20.75 17.75 V14.00" stroke="#bdbdbd" stroke-width="1.4" fill="#fff"/><path d="M3.70 10.20 L7.00 7.60 L10.20 10.50 L18.30 2.50 L21.80 5.70 L10.20 16.70 Z" fill="#0872b3"/></svg><div class="t" style="left:215.0px;top:156.70px;font-size:16.3px;color:#111;font-weight:400;letter-spacing:-0.446px;">DANE_DO_CIT\B\B</div><div class="t" style="left:537.0px;top:156.70px;font-size:16.3px;color:#111;font-weight:400;letter-spacing:0.000px;width:26px;text-align:right">2</div><div class="t" style="left:581.0px;top:156.70px;font-size:16.3px;color:#111;font-weight:400;letter-spacing:-0.052px;">Koszty bilansowe 7%</div><div class="t" style="left:1069.5px;top:156.70px;font-size:16.3px;color:#111;font-weight:400;letter-spacing:0.000px;">+</div><svg class="b" style="left:1231.9px;top:153.1px;" width="22.5" height="21.5" viewBox="0 0 22.5 21.5" fill="none"><path d="M17.40 0.75 H3.75 Q0.75 0.75 0.75 3.75 V17.75 Q0.75 20.75 3.75 20.75 H17.75 Q20.75 20.75 20.75 17.75 V14.00" stroke="#bdbdbd" stroke-width="1.4" fill="#fff"/><path d="M3.70 10.20 L7.00 7.60 L10.20 10.50 L18.30 2.50 L21.80 5.70 L10.20 16.70 Z" fill="#0872b3"/></svg><svg class="b" style="left:1343.9px;top:153.1px;" width="22.5" height="21.5" viewBox="0 0 22.5 21.5" fill="none"><path d="M17.40 0.75 H3.75 Q0.75 0.75 0.75 3.75 V17.75 Q0.75 20.75 3.75 20.75 H17.75 Q20.75 20.75 20.75 17.75 V14.00" stroke="#bdbdbd" stroke-width="1.4" fill="#fff"/><path d="M3.70 10.20 L7.00 7.60 L10.20 10.50 L18.30 2.50 L21.80 5.70 L10.20 16.70 Z" fill="#0872b3"/></svg><div class="b" style="left:1511.6px;top:153.1px;width:21.5px;height:21.5px;border:1.4px solid #bdbdbd;border-radius:3px;background:#fff"></div><div class="b" style="left:0px;top:180px;width:1683px;height:30px;background:#fff;border-bottom:1px solid #e9e9e9"></div><div class="b" style="left:52.5px;top:180px;width:1px;height:30px;background:#eeeeee"></div><div class="b" style="left:85px;top:180px;width:1px;height:30px;background:#eeeeee"></div><div class="b" style="left:8.2px;top:186.2px;width:17.5px;height:17.5px;border:1.4px solid #bdbdbd;border-radius:3px;background:#fff"></div><svg class="b" style="left:136.70000000000002px;top:183.1px;" width="22.5" height="21.5" viewBox="0 0 22.5 21.5" fill="none"><path d="M17.40 0.75 H3.75 Q0.75 0.75 0.75 3.75 V17.75 Q0.75 20.75 3.75 20.75 H17.75 Q20.75 20.75 20.75 17.75 V14.00" stroke="#bdbdbd" stroke-width="1.4" fill="#fff"/><path d="M3.70 10.20 L7.00 7.60 L10.20 10.50 L18.30 2.50 L21.80 5.70 L10.20 16.70 Z" fill="#0872b3"/></svg><div class="t" style="left:215.0px;top:186.70px;font-size:16.3px;color:#111;font-weight:400;letter-spacing:-0.476px;">DANE_DO_CIT\B\C</div><div class="t" style="left:537.0px;top:186.70px;font-size:16.3px;color:#111;font-weight:400;letter-spacing:0.000px;width:26px;text-align:right">2</div><div class="t" style="left:581.0px;top:186.70px;font-size:16.3px;color:#111;font-weight:400;letter-spacing:-0.330px;">Koszty NKUP 4%</div><div class="t" style="left:1069.5px;top:186.70px;font-size:16.3px;color:#111;font-weight:400;letter-spacing:0.000px;">+</div><svg class="b" style="left:1231.9px;top:183.1px;" width="22.5" height="21.5" viewBox="0 0 22.5 21.5" fill="none"><path d="M17.40 0.75 H3.75 Q0.75 0.75 0.75 3.75 V17.75 Q0.75 20.75 3.75 20.75 H17.75 Q20.75 20.75 20.75 17.75 V14.00" stroke="#bdbdbd" stroke-width="1.4" fill="#fff"/><path d="M3.70 10.20 L7.00 7.60 L10.20 10.50 L18.30 2.50 L21.80 5.70 L10.20 16.70 Z" fill="#0872b3"/></svg><svg class="b" style="left:1343.9px;top:183.1px;" width="22.5" height="21.5" viewBox="0 0 22.5 21.5" fill="none"><path d="M17.40 0.75 H3.75 Q0.75 0.75 0.75 3.75 V17.75 Q0.75 20.75 3.75 20.75 H17.75 Q20.75 20.75 20.75 17.75 V14.00" stroke="#bdbdbd" stroke-width="1.4" fill="#fff"/><path d="M3.70 10.20 L7.00 7.60 L10.20 10.50 L18.30 2.50 L21.80 5.70 L10.20 16.70 Z" fill="#0872b3"/></svg><div class="b" style="left:1511.6px;top:183.1px;width:21.5px;height:21.5px;border:1.4px solid #bdbdbd;border-radius:3px;background:#fff"></div><div class="b" style="left:0px;top:210px;width:1683px;height:30px;background:#fff;border-bottom:1px solid #e9e9e9"></div><div class="b" style="left:52.5px;top:210px;width:1px;height:30px;background:#eeeeee"></div><div class="b" style="left:85px;top:210px;width:1px;height:30px;background:#eeeeee"></div><div class="b" style="left:8.2px;top:216.2px;width:17.5px;height:17.5px;border:1.4px solid #bdbdbd;border-radius:3px;background:#fff"></div><svg class="b" style="left:136.70000000000002px;top:213.1px;" width="22.5" height="21.5" viewBox="0 0 22.5 21.5" fill="none"><path d="M17.40 0.75 H3.75 Q0.75 0.75 0.75 3.75 V17.75 Q0.75 20.75 3.75 20.75 H17.75 Q20.75 20.75 20.75 17.75 V14.00" stroke="#bdbdbd" stroke-width="1.4" fill="#fff"/><path d="M3.70 10.20 L7.00 7.60 L10.20 10.50 L18.30 2.50 L21.80 5.70 L10.20 16.70 Z" fill="#0872b3"/></svg><div class="t" style="left:215.0px;top:216.70px;font-size:16.3px;color:#111;font-weight:400;letter-spacing:-0.470px;">DANE_DO_CIT\B\D</div><div class="t" style="left:537.0px;top:216.70px;font-size:16.3px;color:#111;font-weight:400;letter-spacing:0.000px;width:26px;text-align:right">2</div><div class="t" style="left:581.0px;top:216.70px;font-size:16.3px;color:#111;font-weight:400;letter-spacing:-0.330px;">Koszty NKUP 7%</div><div class="t" style="left:1069.5px;top:216.70px;font-size:16.3px;color:#111;font-weight:400;letter-spacing:0.000px;">+</div><svg class="b" style="left:1231.9px;top:213.1px;" width="22.5" height="21.5" viewBox="0 0 22.5 21.5" fill="none"><path d="M17.40 0.75 H3.75 Q0.75 0.75 0.75 3.75 V17.75 Q0.75 20.75 3.75 20.75 H17.75 Q20.75 20.75 20.75 17.75 V14.00" stroke="#bdbdbd" stroke-width="1.4" fill="#fff"/><path d="M3.70 10.20 L7.00 7.60 L10.20 10.50 L18.30 2.50 L21.80 5.70 L10.20 16.70 Z" fill="#0872b3"/></svg><svg class="b" style="left:1343.9px;top:213.1px;" width="22.5" height="21.5" viewBox="0 0 22.5 21.5" fill="none"><path d="M17.40 0.75 H3.75 Q0.75 0.75 0.75 3.75 V17.75 Q0.75 20.75 3.75 20.75 H17.75 Q20.75 20.75 20.75 17.75 V14.00" stroke="#bdbdbd" stroke-width="1.4" fill="#fff"/><path d="M3.70 10.20 L7.00 7.60 L10.20 10.50 L18.30 2.50 L21.80 5.70 L10.20 16.70 Z" fill="#0872b3"/></svg><div class="b" style="left:1511.6px;top:213.1px;width:21.5px;height:21.5px;border:1.4px solid #bdbdbd;border-radius:3px;background:#fff"></div><div class="b" style="left:0px;top:240px;width:1683px;height:30px;background:#fff;border-bottom:1px solid #e9e9e9"></div><div class="b" style="left:52.5px;top:240px;width:1px;height:30px;background:#eeeeee"></div><div class="b" style="left:85px;top:240px;width:1px;height:30px;background:#eeeeee"></div><div class="b" style="left:8.2px;top:246.2px;width:17.5px;height:17.5px;border:1.4px solid #bdbdbd;border-radius:3px;background:#fff"></div><div class="b" style="left:60px;top:247px;width:17.7px;height:16.8px;background:#4f8c2f;border-radius:3.5px;box-shadow:inset 0 0 0 1px #4a8a2a,inset 0 0 0 1.6px #86b86a"></div><svg class="b" style="left:136.70000000000002px;top:243.1px;" width="22.5" height="21.5" viewBox="0 0 22.5 21.5" fill="none"><path d="M17.40 0.75 H3.75 Q0.75 0.75 0.75 3.75 V17.75 Q0.75 20.75 3.75 20.75 H17.75 Q20.75 20.75 20.75 17.75 V14.00" stroke="#bdbdbd" stroke-width="1.4" fill="#fff"/><path d="M3.70 10.20 L7.00 7.60 L10.20 10.50 L18.30 2.50 L21.80 5.70 L10.20 16.70 Z" fill="#0872b3"/></svg><div class="t" style="left:215.0px;top:246.70px;font-size:16.3px;color:#111;font-weight:400;letter-spacing:-0.673px;">DANE_DO_CIT\C</div><div class="t" style="left:537.0px;top:246.70px;font-size:16.3px;color:#111;font-weight:400;letter-spacing:0.000px;width:26px;text-align:right">1</div><div class="t" style="left:581.0px;top:246.70px;font-size:16.3px;color:#111;font-weight:400;letter-spacing:0.119px;">Wynik brutto bilansowy</div><div class="t" style="left:1069.5px;top:246.70px;font-size:16.3px;color:#111;font-weight:400;letter-spacing:0.000px;">+</div><svg class="b" style="left:1231.9px;top:243.1px;" width="22.5" height="21.5" viewBox="0 0 22.5 21.5" fill="none"><path d="M17.40 0.75 H3.75 Q0.75 0.75 0.75 3.75 V17.75 Q0.75 20.75 3.75 20.75 H17.75 Q20.75 20.75 20.75 17.75 V14.00" stroke="#bdbdbd" stroke-width="1.4" fill="#fff"/><path d="M3.70 10.20 L7.00 7.60 L10.20 10.50 L18.30 2.50 L21.80 5.70 L10.20 16.70 Z" fill="#0872b3"/></svg><svg class="b" style="left:1343.9px;top:243.1px;" width="22.5" height="21.5" viewBox="0 0 22.5 21.5" fill="none"><path d="M17.40 0.75 H3.75 Q0.75 0.75 0.75 3.75 V17.75 Q0.75 20.75 3.75 20.75 H17.75 Q20.75 20.75 20.75 17.75 V14.00" stroke="#bdbdbd" stroke-width="1.4" fill="#fff"/><path d="M3.70 10.20 L7.00 7.60 L10.20 10.50 L18.30 2.50 L21.80 5.70 L10.20 16.70 Z" fill="#0872b3"/></svg><svg class="b" style="left:1511.0px;top:243.1px;" width="22.5" height="21.5" viewBox="0 0 22.5 21.5" fill="none"><path d="M17.40 0.75 H3.75 Q0.75 0.75 0.75 3.75 V17.75 Q0.75 20.75 3.75 20.75 H17.75 Q20.75 20.75 20.75 17.75 V14.00" stroke="#bdbdbd" stroke-width="1.4" fill="#fff"/><path d="M3.70 10.20 L7.00 7.60 L10.20 10.50 L18.30 2.50 L21.80 5.70 L10.20 16.70 Z" fill="#0872b3"/></svg></div><div class="b" style="left:25px;top:315px;width:1683px;height:1.1px;background:#3b769c"></div><div class="b" style="left:25px;top:316.1px;width:1683px;height:0.8px;background:#b4d6e8"></div><div class="b" style="left:25px;top:343.6px;width:1683px;height:1.6px;background:#555"></div><div class="b" style="left:25px;top:315px;width:4.3px;height:30px;background:#1a74b8"></div><div class="b" style="left:29.3px;top:317.3px;width:23.5px;height:26.5px;background:#f0f0f0"></div><div class="b" style="left:33.2px;top:321.2px;width:17.5px;height:17.5px;border:1.4px solid #bdbdbd;border-radius:3px;background:#fff"></div><div class="b" style="left:595.8px;top:317px;width:333.5px;height:26px;border:2.2px solid #0b6fb0"></div><div class="b" style="left:1707.5px;top:285px;width:1.3px;height:258px;background:#ececec"></div><svg class="b" style="left:1713px;top:288px;" width="11" height="8" viewBox="0 0 11 8" fill="none"><path d="M1 6.5 L5.5 2 L10 6.5" stroke="#d6d6d6" stroke-width="1.3"/></svg><div class="b" style="left:1713.6px;top:301.5px;width:10.5px;height:74.5px;background:#e4e4e4;border-radius:5px"></div><svg class="b" style="left:1713px;top:531px;" width="11" height="8" viewBox="0 0 11 8" fill="none"><path d="M1 1.5 L5.5 6 L10 1.5" stroke="#d6d6d6" stroke-width="1.3"/></svg><div class="b" style="left:29.8px;top:565.5px;width:2.7px;height:2.7px;background:#333;border-radius:50%"></div><div class="b" style="left:29.8px;top:572.3px;width:2.7px;height:2.7px;background:#333;border-radius:50%"></div><div class="b" style="left:29.8px;top:579.1px;width:2.7px;height:2.7px;background:#333;border-radius:50%"></div><svg class="b" style="left:59px;top:566px;" width="11" height="17" viewBox="0 0 11 17" fill="none"><path d="M8.5 1.5 L2.5 8 L8.5 14.5" stroke="#d4d4d4" stroke-width="1.4"/></svg><div class="t" style="left:103.5px;top:565.40px;font-size:16.3px;color:#555;font-weight:400;-webkit-text-stroke:0.4px #555;letter-spacing:0.240px;">Wymiary linijek</div><div class="t" style="left:266.4px;top:565.40px;font-size:16.3px;color:#555;font-weight:400;-webkit-text-stroke:0.4px #555;letter-spacing:0.247px;width:262px;overflow:hidden;-webkit-mask-image:linear-gradient(90deg,#000 0,#000 207px,rgba(0,0,0,0.12) 262px)">Definicja wyliczania&nbsp; kwot realizacji</div><div class="t" style="left:581.0px;top:565.40px;font-size:16.3px;color:#555;font-weight:400;-webkit-text-stroke:0.4px #555;letter-spacing:0.244px;width:290px;overflow:hidden;-webkit-mask-image:linear-gradient(90deg,#000 0,#000 235px,rgba(0,0,0,0.12) 290px)">Definicja wyliczania kwot planowanych</div><div class="b" style="left:896.7px;top:556px;width:237.1px;height:40px;background:#fff;border-radius:10px 10px 0 0"></div><div class="t" style="left:924.0px;top:565.40px;font-size:16.3px;color:#222;font-weight:400;-webkit-text-stroke:0.4px #222;letter-spacing:0.195px;">Grupowanie kont planów</div><div class="b" style="left:918px;top:590px;width:194.6px;height:3px;background:#1a8ad6;border-radius:2px"></div><div class="t" style="left:1160.0px;top:565.40px;font-size:16.3px;color:#555;font-weight:400;-webkit-text-stroke:0.4px #555;letter-spacing:0.218px;width:260px;overflow:hidden;-webkit-mask-image:linear-gradient(90deg,#000 0,#000 205px,rgba(0,0,0,0.12) 260px)">Elementy planów konsolidacyjnych</div><div class="t" style="left:1470.0px;top:565.40px;font-size:16.3px;color:#555;font-weight:400;-webkit-text-stroke:0.4px #555;letter-spacing:0.343px;">Administracja uprawnieniami</div><svg class="b" style="left:1722px;top:566px;" width="12" height="17" viewBox="0 0 12 17" fill="none"><path d="M2.5 1.5 L8.5 8 L2.5 14.5" stroke="#8a8a8a" stroke-width="1.4"/></svg><div class="b" style="left:13px;top:593px;width:1727px;height:328.5px;background:#fff;border-radius:10px;box-shadow:0 0.5px 0 #e2e2e2"></div><svg class="b" style="left:886.7px;top:583px;" width="10" height="10" viewBox="0 0 10 10" fill="none"><path d="M10 0 V10 H0 Q10 10 10 0 Z" fill="#fff"/></svg><svg class="b" style="left:1133.8px;top:583px;" width="10" height="10" viewBox="0 0 10 10" fill="none"><path d="M0 0 V10 H10 Q0 10 0 0 Z" fill="#fff"/></svg><svg class="b" style="left:31px;top:608px;" width="24" height="24" viewBox="0 0 24 24" fill="none"><path d="M8 22.2 H0.7 V0.7 H11.6 L17.6 6.7 V8.5" stroke="#333" stroke-width="1.3"/><path d="M11.6 0.7 V6.7 H17.4" stroke="#333" stroke-width="1.3"/><circle cx="16.2" cy="17.2" r="6.1" fill="#fff" stroke="#1ea84a" stroke-width="1.4"/><path d="M12.4 17.2 H20 M16.2 13.4 V21" stroke="#1ea84a" stroke-width="1.6"/></svg><div class="t" style="left:60.8px;top:612.00px;font-size:16.3px;color:#111;font-weight:400;-webkit-text-stroke:0.4px #111;letter-spacing:0.133px;">Nowy</div><svg class="b" style="left:112px;top:616.5px;" width="12" height="7.5" viewBox="0 0 12 7.5" fill="none"><path d="M1 1 L6.0 6.5 L11 1" stroke="#222" stroke-width="1.9"/></svg><svg class="b" style="left:143px;top:608px;" width="24" height="24" viewBox="0 0 24 24" fill="none"><path d="M4.8 22.2 H0.7 V0.7 H11 L17 6.7" stroke="#333" stroke-width="1.3"/><path d="M11 0.7 V6.7 H17" stroke="#333" stroke-width="1.3"/><path d="M13.5 22.2 H17.2 V18.5" stroke="#333" stroke-width="1.3"/><path d="M7.6 23.6 L8.6 19.6 L19.4 8.8 Q20.5 7.8 21.6 8.9 Q22.5 10 21.5 11 L10.7 21.8 Z M8.9 19.3 L11 21.5 M18 10.2 L20.2 12.4" stroke="#2b8fd6" stroke-width="1.3" fill="#fff"/></svg><div class="t" style="left:172.0px;top:612.00px;font-size:16.3px;color:#111;font-weight:400;-webkit-text-stroke:0.4px #111;letter-spacing:-0.159px;">Edycja</div><svg class="b" style="left:237px;top:608px;" width="24" height="24" viewBox="0 0 24 24" fill="none"><path d="M8 22.2 H0.7 V0.7 H11.6 L17.6 6.7 V8.5" stroke="#333" stroke-width="1.3"/><path d="M11.6 0.7 V6.7 H17.4" stroke="#333" stroke-width="1.3"/><circle cx="16.2" cy="17.2" r="6.1" fill="#fff" stroke="#a04cb8" stroke-width="1.4"/><path d="M16.2 15.5 V20.8" stroke="#a04cb8" stroke-width="1.6"/><circle cx="16.2" cy="13.6" r="0.9" fill="#a04cb8"/></svg><svg class="b" style="left:272px;top:616.5px;" width="12" height="7.5" viewBox="0 0 12 7.5" fill="none"><path d="M1 1 L6.0 6.5 L11 1" stroke="#222" stroke-width="1.9"/></svg><svg class="b" style="left:304px;top:608px;" width="24" height="24" viewBox="0 0 24 24" fill="none"><path d="M8 22.2 H0.7 V0.7 H11.6 L17.6 6.7 V8.5" stroke="#333" stroke-width="1.3"/><path d="M11.6 0.7 V6.7 H17.4" stroke="#333" stroke-width="1.3"/><circle cx="16.2" cy="17.2" r="6.1" fill="#fff" stroke="#e23b3b" stroke-width="1.4"/><path d="M13.8 14.8 L18.6 19.6 M18.6 14.8 L13.8 19.6" stroke="#e23b3b" stroke-width="1.5"/></svg><svg class="b" style="left:346px;top:608px;" width="24" height="24" viewBox="0 0 24 24" fill="none"><path d="M5.4 7.5 V0.8 H19.1 V7.5" stroke="#333" stroke-width="1.5"/><path d="M5 19 H0.8 V7.9 H23.2 V19 H19" stroke="#333" stroke-width="1.5"/><rect x="5.4" y="14.2" width="13.7" height="9" stroke="#333" stroke-width="1.5" fill="#fff"/><path d="M7.8 17.3 H16.2 M7.8 20.3 H16.2" stroke="#555" stroke-width="1.1"/><path d="M3 11.2 H6" stroke="#1e8ad6" stroke-width="1.4"/></svg><svg class="b" style="left:381.4px;top:616.5px;" width="12" height="7.5" viewBox="0 0 12 7.5" fill="none"><path d="M1 1 L6.0 6.5 L11 1" stroke="#222" stroke-width="1.9"/></svg><svg class="b" style="left:414.5px;top:607.5px;" width="25" height="25" viewBox="0 0 25 25" fill="none"><rect x="0.8" y="9.3" width="5.6" height="14.5" fill="#bfe0c4" stroke="#14a24a" stroke-width="1.6"/><rect x="9.3" y="0.8" width="5.6" height="23" fill="#f7d98f" stroke="#ea8a2a" stroke-width="1.6"/><rect x="17.8" y="5.8" width="5.6" height="18" fill="#f5c2c2" stroke="#e02e2e" stroke-width="1.6"/></svg><svg class="b" style="left:445.6px;top:616.5px;" width="11.5" height="7.5" viewBox="0 0 11.5 7.5" fill="none"><path d="M1 1 L5.75 6.5 L10.5 1" stroke="#222" stroke-width="1.9"/></svg><svg class="b" style="left:1582px;top:607px;" width="26" height="26" viewBox="0 0 26 26" fill="none"><path d="M13 23.2 H1.3 V1.4 H23.5 V12.4" stroke="#333" stroke-width="1.3"/><rect x="1.3" y="1.4" width="22.2" height="4.8" fill="#b5b5b5" stroke="#333" stroke-width="1.3"/><circle cx="16.6" cy="16.4" r="4.1" stroke="#333" stroke-width="1.4"/><path d="M19.6 19.5 L24 24" stroke="#333" stroke-width="1.6"/></svg><div class="t" style="left:1612.0px;top:612.20px;font-size:16.3px;color:#111;font-weight:400;-webkit-text-stroke:0.4px #111;letter-spacing:0.105px;">Podgląd</div><svg class="b" style="left:1691.0px;top:607.0px;" width="26" height="27" viewBox="0 0 26 27" fill="none"><path d="M1.8 13 A11 11 0 0 1 22.3 7.5" stroke="#333" stroke-width="1.5"/><path d="M24.1 1 V9.6 H16" stroke="#333" stroke-width="1.5"/><path d="M23.8 13 A11 11 0 0 1 3.3 18.5" stroke="#333" stroke-width="1.5"/><path d="M1.4 25 V16.4 H9.3" stroke="#333" stroke-width="1.5"/></svg><div class="b" style="left:25px;top:646px;width:1703px;height:61px;background:#f4f4f4"></div><div class="b" style="left:65.5px;top:647px;width:1.3px;height:59px;background:#e3e3e3"></div><div class="b" style="left:536.2px;top:647px;width:1.3px;height:59px;background:#e3e3e3"></div><div class="b" style="left:1134.8px;top:647px;width:1.3px;height:59px;background:#e3e3e3"></div><div class="b" style="left:1259.2px;top:647px;width:1.3px;height:59px;background:#e3e3e3"></div><div class="b" style="left:1661.6px;top:647px;width:1.3px;height:59px;background:#e3e3e3"></div><div class="b" style="left:1707.8px;top:647px;width:1.3px;height:59px;background:#e3e3e3"></div><div class="b" style="left:375.5px;top:678px;width:1.3px;height:28px;background:#e3e3e3"></div><div class="b" style="left:636px;top:678px;width:1.3px;height:28px;background:#e3e3e3"></div><div class="b" style="left:737px;top:678px;width:1.3px;height:28px;background:#e3e3e3"></div><div class="b" style="left:896.8px;top:678px;width:1.3px;height:28px;background:#e3e3e3"></div><div class="b" style="left:965.3px;top:678px;width:1.3px;height:28px;background:#e3e3e3"></div><div class="b" style="left:1067px;top:678px;width:1.3px;height:28px;background:#e3e3e3"></div><div class="b" style="left:1359.2px;top:678px;width:1.3px;height:28px;background:#e3e3e3"></div><div class="b" style="left:1460.5px;top:678px;width:1.3px;height:28px;background:#e3e3e3"></div><div class="b" style="left:1560.5px;top:678px;width:1.3px;height:28px;background:#e3e3e3"></div><div class="b" style="left:65.5px;top:676.7px;width:1069.3px;height:1.3px;background:#e3e3e3"></div><div class="b" style="left:1259.2px;top:676.7px;width:402.4px;height:1.3px;background:#e3e3e3"></div><div class="t" style="left:72.2px;top:654.40px;font-size:16.3px;color:#1e1e1e;font-weight:400;-webkit-text-stroke:0.4px #1e1e1e;letter-spacing:0.027px;">Plan</div><div class="t" style="left:72.2px;top:682.40px;font-size:16.3px;color:#1e1e1e;font-weight:400;-webkit-text-stroke:0.4px #1e1e1e;letter-spacing:0.130px;">Symbol</div><div class="t" style="left:382.6px;top:682.40px;font-size:16.3px;color:#1e1e1e;font-weight:400;-webkit-text-stroke:0.4px #1e1e1e;letter-spacing:0.112px;">Wymiar</div><div class="t" style="left:543.0px;top:654.40px;font-size:16.3px;color:#1e1e1e;font-weight:400;-webkit-text-stroke:0.4px #1e1e1e;letter-spacing:0.154px;">Definicja grupowania</div><div class="t" style="left:543.0px;top:682.40px;font-size:16.3px;color:#1e1e1e;font-weight:400;-webkit-text-stroke:0.4px #1e1e1e;letter-spacing:0.074px;">Znak</div><div class="t" style="left:643.5px;top:682.40px;font-size:16.3px;color:#1e1e1e;font-weight:400;-webkit-text-stroke:0.4px #1e1e1e;letter-spacing:0.039px;">Księga</div><div class="t" style="left:743.7px;top:682.40px;font-size:16.3px;color:#1e1e1e;font-weight:400;-webkit-text-stroke:0.4px #1e1e1e;letter-spacing:0.209px;">Maska konta</div><div class="t" style="left:904.7px;top:682.40px;font-size:16.3px;color:#1e1e1e;font-weight:400;-webkit-text-stroke:0.4px #1e1e1e;letter-spacing:-0.398px;">Wn</div><div class="t" style="left:972.0px;top:682.40px;font-size:16.3px;color:#1e1e1e;font-weight:400;-webkit-text-stroke:0.4px #1e1e1e;letter-spacing:-0.127px;">Ma - Wn</div><div class="t" style="left:1074.0px;top:682.40px;font-size:16.3px;color:#1e1e1e;font-weight:400;-webkit-text-stroke:0.4px #1e1e1e;letter-spacing:0.312px;">Ma</div><div class="t" style="left:1141.6px;top:654.40px;font-size:16.3px;color:#1e1e1e;font-weight:400;-webkit-text-stroke:0.4px #1e1e1e;letter-spacing:-0.094px;">Operacja</div><div class="t" style="left:1266.0px;top:654.40px;font-size:16.3px;color:#1e1e1e;font-weight:400;-webkit-text-stroke:0.4px #1e1e1e;letter-spacing:0.149px;">Parametry konta - maski</div><div class="t" style="left:1266.0px;top:682.40px;font-size:16.3px;color:#1e1e1e;font-weight:400;-webkit-text-stroke:0.4px #1e1e1e;letter-spacing:0.051px;width:92px;overflow:hidden">Rodzaj konta</div><div class="t" style="left:1366.0px;top:682.40px;font-size:16.3px;color:#1e1e1e;font-weight:400;-webkit-text-stroke:0.4px #1e1e1e;letter-spacing:0.046px;width:93px;overflow:hidden">Rodzaj operacji</div><div class="t" style="left:1467.0px;top:682.40px;font-size:16.3px;color:#1e1e1e;font-weight:400;-webkit-text-stroke:0.4px #1e1e1e;letter-spacing:0.099px;width:92px;overflow:hidden">Różnica podatkowa</div><div class="t" style="left:1567.0px;top:682.40px;font-size:16.3px;color:#1e1e1e;font-weight:400;-webkit-text-stroke:0.4px #1e1e1e;letter-spacing:0.030px;">Grupa kont</div><div class="b" style="left:36.3px;top:685.4px;width:17.5px;height:17.5px;border:1.4px solid #bdbdbd;border-radius:3px;background:#fff"></div><svg class="b" style="left:1711px;top:667px;" width="12" height="17" viewBox="0 0 12 17" fill="none"><path d="M9 1.5 L2.5 8.2 L9 15" stroke="#a0a0a0" stroke-width="1.4"/></svg><div class="b" style="left:1649.5px;top:638.3px;width:39px;height:19.5px;background:#fff;border:1.5px solid #dcdcdc;border-radius:10px"></div><svg class="b" style="left:1660px;top:643px;" width="18" height="10" viewBox="0 0 18 10" fill="none"><path d="M2 2 L9 8 L16 2" stroke="#9d9d9d" stroke-width="2"/></svg><div class="b" style="left:25px;top:708px;width:1703px;height:30px;background:#fff;border-bottom:1.3px solid #e9e9e9"></div><div class="b" style="left:65.5px;top:708px;width:1px;height:30px;background:#eeeeee"></div><div class="b" style="left:375.5px;top:708px;width:161.5px;height:29px;background:#fdfde4"></div><div class="b" style="left:36.3px;top:714.5px;width:17.5px;height:17.5px;border:1.4px solid #bdbdbd;border-radius:3px;background:#fff"></div><div class="t" style="left:76.5px;top:715.40px;font-size:16.3px;color:#111;font-weight:400;letter-spacing:-0.382px;">DANE_DO_CIT\A\A</div><div class="t" style="left:387.0px;top:715.40px;font-size:16.3px;color:#111;font-weight:400;letter-spacing:-0.691px;">WART</div><div class="t" style="left:547.3px;top:715.40px;font-size:16.3px;color:#111;font-weight:400;letter-spacing:0.000px;">+</div><div class="t" style="left:648.0px;top:715.40px;font-size:16.3px;color:#111;font-weight:400;letter-spacing:0.000px;">K</div><div class="t" style="left:747.8px;top:715.40px;font-size:16.3px;color:#111;font-weight:400;letter-spacing:-0.551px;">7_[12]%</div><div class="b" style="left:924px;top:711.3px;width:21.5px;height:21.5px;border:1.4px solid #bdbdbd;border-radius:3px;background:#fff"></div><div class="b" style="left:1008px;top:711.3px;width:21.5px;height:21.5px;border:1.4px solid #bdbdbd;border-radius:3px;background:#fff"></div><svg class="b" style="left:1094px;top:711.3px;" width="22.5" height="21.5" viewBox="0 0 22.5 21.5" fill="none"><path d="M17.40 0.75 H3.75 Q0.75 0.75 0.75 3.75 V17.75 Q0.75 20.75 3.75 20.75 H17.75 Q20.75 20.75 20.75 17.75 V14.00" stroke="#bdbdbd" stroke-width="1.4" fill="#fff"/><path d="M3.70 10.20 L7.00 7.60 L10.20 10.50 L18.30 2.50 L21.80 5.70 L10.20 16.70 Z" fill="#0872b3"/></svg><div class="t" style="left:1146.8px;top:715.40px;font-size:16.3px;color:#111;font-weight:400;letter-spacing:-0.926px;">PERSALDO</div><div class="t" style="left:1270.0px;top:715.40px;font-size:16.3px;color:#111;font-weight:400;letter-spacing:0.000px;">%</div><div class="t" style="left:1371.0px;top:715.40px;font-size:16.3px;color:#111;font-weight:400;letter-spacing:0.000px;">%</div><div class="t" style="left:1471.5px;top:715.40px;font-size:16.3px;color:#111;font-weight:400;letter-spacing:0.000px;">%</div><div class="t" style="left:1571.5px;top:715.40px;font-size:16.3px;color:#111;font-weight:400;letter-spacing:0.000px;">%</div><div class="b" style="left:25px;top:738px;width:1703px;height:30px;background:#fff;border-bottom:1.3px solid #e9e9e9"></div><div class="b" style="left:65.5px;top:738px;width:1px;height:30px;background:#eeeeee"></div><div class="b" style="left:375.5px;top:738px;width:161.5px;height:29px;background:#fdfde4"></div><div class="b" style="left:36.3px;top:744.5px;width:17.5px;height:17.5px;border:1.4px solid #bdbdbd;border-radius:3px;background:#fff"></div><div class="t" style="left:76.5px;top:745.40px;font-size:16.3px;color:#111;font-weight:400;letter-spacing:-0.382px;">DANE_DO_CIT\A\A</div><div class="t" style="left:387.0px;top:745.40px;font-size:16.3px;color:#111;font-weight:400;letter-spacing:-0.691px;">WART</div><div class="t" style="left:547.3px;top:745.40px;font-size:16.3px;color:#111;font-weight:400;letter-spacing:0.000px;">+</div><div class="t" style="left:648.0px;top:745.40px;font-size:16.3px;color:#111;font-weight:400;letter-spacing:0.000px;">K</div><div class="t" style="left:747.8px;top:745.40px;font-size:16.3px;color:#111;font-weight:400;letter-spacing:-0.473px;">700%</div><div class="b" style="left:924px;top:741.3px;width:21.5px;height:21.5px;border:1.4px solid #bdbdbd;border-radius:3px;background:#fff"></div><div class="b" style="left:1008px;top:741.3px;width:21.5px;height:21.5px;border:1.4px solid #bdbdbd;border-radius:3px;background:#fff"></div><svg class="b" style="left:1094px;top:741.3px;" width="22.5" height="21.5" viewBox="0 0 22.5 21.5" fill="none"><path d="M17.40 0.75 H3.75 Q0.75 0.75 0.75 3.75 V17.75 Q0.75 20.75 3.75 20.75 H17.75 Q20.75 20.75 20.75 17.75 V14.00" stroke="#bdbdbd" stroke-width="1.4" fill="#fff"/><path d="M3.70 10.20 L7.00 7.60 L10.20 10.50 L18.30 2.50 L21.80 5.70 L10.20 16.70 Z" fill="#0872b3"/></svg><div class="t" style="left:1146.8px;top:745.40px;font-size:16.3px;color:#111;font-weight:400;letter-spacing:-0.926px;">PERSALDO</div><div class="t" style="left:1270.0px;top:745.40px;font-size:16.3px;color:#111;font-weight:400;letter-spacing:0.000px;">%</div><div class="t" style="left:1371.0px;top:745.40px;font-size:16.3px;color:#111;font-weight:400;letter-spacing:0.000px;">%</div><div class="t" style="left:1471.5px;top:745.40px;font-size:16.3px;color:#111;font-weight:400;letter-spacing:0.000px;">%</div><div class="t" style="left:1571.5px;top:745.40px;font-size:16.3px;color:#111;font-weight:400;letter-spacing:0.000px;">%</div><div class="b" style="left:25px;top:768px;width:1703px;height:30px;background:#fff;border-bottom:1.3px solid #e9e9e9"></div><div class="b" style="left:65.5px;top:768px;width:1px;height:30px;background:#eeeeee"></div><div class="b" style="left:375.5px;top:768px;width:161.5px;height:29px;background:#fdfde4"></div><div class="b" style="left:36.3px;top:774.5px;width:17.5px;height:17.5px;border:1.4px solid #bdbdbd;border-radius:3px;background:#fff"></div><div class="t" style="left:76.5px;top:775.40px;font-size:16.3px;color:#111;font-weight:400;letter-spacing:-0.382px;">DANE_DO_CIT\A\A</div><div class="t" style="left:387.0px;top:775.40px;font-size:16.3px;color:#111;font-weight:400;letter-spacing:-0.397px;">WARTM</div><div class="t" style="left:547.3px;top:775.40px;font-size:16.3px;color:#111;font-weight:400;letter-spacing:0.000px;">+</div><div class="t" style="left:648.0px;top:775.40px;font-size:16.3px;color:#111;font-weight:400;letter-spacing:0.000px;">K</div><div class="t" style="left:747.8px;top:775.40px;font-size:16.3px;color:#111;font-weight:400;letter-spacing:-0.473px;">700%</div><div class="b" style="left:924px;top:771.3px;width:21.5px;height:21.5px;border:1.4px solid #bdbdbd;border-radius:3px;background:#fff"></div><svg class="b" style="left:1008.3px;top:771.3px;" width="22.5" height="21.5" viewBox="0 0 22.5 21.5" fill="none"><path d="M17.40 0.75 H3.75 Q0.75 0.75 0.75 3.75 V17.75 Q0.75 20.75 3.75 20.75 H17.75 Q20.75 20.75 20.75 17.75 V14.00" stroke="#bdbdbd" stroke-width="1.4" fill="#fff"/><path d="M3.70 10.20 L7.00 7.60 L10.20 10.50 L18.30 2.50 L21.80 5.70 L10.20 16.70 Z" fill="#0872b3"/></svg><div class="b" style="left:1094px;top:771.3px;width:21.5px;height:21.5px;border:1.4px solid #bdbdbd;border-radius:3px;background:#fff"></div><div class="t" style="left:1146.8px;top:775.40px;font-size:16.3px;color:#111;font-weight:400;letter-spacing:-1.029px;">OBROTY</div><div class="t" style="left:1270.0px;top:775.40px;font-size:16.3px;color:#111;font-weight:400;letter-spacing:0.000px;">%</div><div class="t" style="left:1371.0px;top:775.40px;font-size:16.3px;color:#111;font-weight:400;letter-spacing:0.000px;">%</div><div class="t" style="left:1471.5px;top:775.40px;font-size:16.3px;color:#111;font-weight:400;letter-spacing:0.000px;">%</div><div class="t" style="left:1571.5px;top:775.40px;font-size:16.3px;color:#111;font-weight:400;letter-spacing:0.000px;">%</div><div class="b" style="left:25px;top:798px;width:1703px;height:30px;background:#fff;border-bottom:1.3px solid #e9e9e9"></div><div class="b" style="left:65.5px;top:798px;width:1px;height:30px;background:#eeeeee"></div><div class="b" style="left:375.5px;top:798px;width:161.5px;height:29px;background:#fdfde4"></div><div class="b" style="left:36.3px;top:804.5px;width:17.5px;height:17.5px;border:1.4px solid #bdbdbd;border-radius:3px;background:#fff"></div><div class="t" style="left:76.5px;top:805.40px;font-size:16.3px;color:#111;font-weight:400;letter-spacing:-0.382px;">DANE_DO_CIT\A\A</div><div class="t" style="left:387.0px;top:805.40px;font-size:16.3px;color:#111;font-weight:400;letter-spacing:-0.397px;">WARTM</div><div class="t" style="left:547.3px;top:805.40px;font-size:16.3px;color:#111;font-weight:400;letter-spacing:0.000px;">+</div><div class="t" style="left:648.0px;top:805.40px;font-size:16.3px;color:#111;font-weight:400;letter-spacing:0.000px;">K</div><div class="t" style="left:747.8px;top:805.40px;font-size:16.3px;color:#111;font-weight:400;letter-spacing:-0.551px;">7_[12]%</div><div class="b" style="left:924px;top:801.3px;width:21.5px;height:21.5px;border:1.4px solid #bdbdbd;border-radius:3px;background:#fff"></div><svg class="b" style="left:1008.3px;top:801.3px;" width="22.5" height="21.5" viewBox="0 0 22.5 21.5" fill="none"><path d="M17.40 0.75 H3.75 Q0.75 0.75 0.75 3.75 V17.75 Q0.75 20.75 3.75 20.75 H17.75 Q20.75 20.75 20.75 17.75 V14.00" stroke="#bdbdbd" stroke-width="1.4" fill="#fff"/><path d="M3.70 10.20 L7.00 7.60 L10.20 10.50 L18.30 2.50 L21.80 5.70 L10.20 16.70 Z" fill="#0872b3"/></svg><div class="b" style="left:1094px;top:801.3px;width:21.5px;height:21.5px;border:1.4px solid #bdbdbd;border-radius:3px;background:#fff"></div><div class="t" style="left:1146.8px;top:805.40px;font-size:16.3px;color:#111;font-weight:400;letter-spacing:-1.029px;">OBROTY</div><div class="t" style="left:1270.0px;top:805.40px;font-size:16.3px;color:#111;font-weight:400;letter-spacing:0.000px;">%</div><div class="t" style="left:1371.0px;top:805.40px;font-size:16.3px;color:#111;font-weight:400;letter-spacing:0.000px;">%</div><div class="t" style="left:1471.5px;top:805.40px;font-size:16.3px;color:#111;font-weight:400;letter-spacing:0.000px;">%</div><div class="t" style="left:1571.5px;top:805.40px;font-size:16.3px;color:#111;font-weight:400;letter-spacing:0.000px;">%</div><div class="b" style="left:25px;top:707px;width:1703px;height:1.1px;background:#3b769c"></div><div class="b" style="left:25px;top:708.1px;width:1703px;height:0.8px;background:#b4d6e8"></div><div class="b" style="left:25px;top:736.6px;width:1703px;height:1.6px;background:#555"></div><div class="b" style="left:25px;top:707px;width:4.3px;height:30px;background:#1a74b8"></div></body></html>
